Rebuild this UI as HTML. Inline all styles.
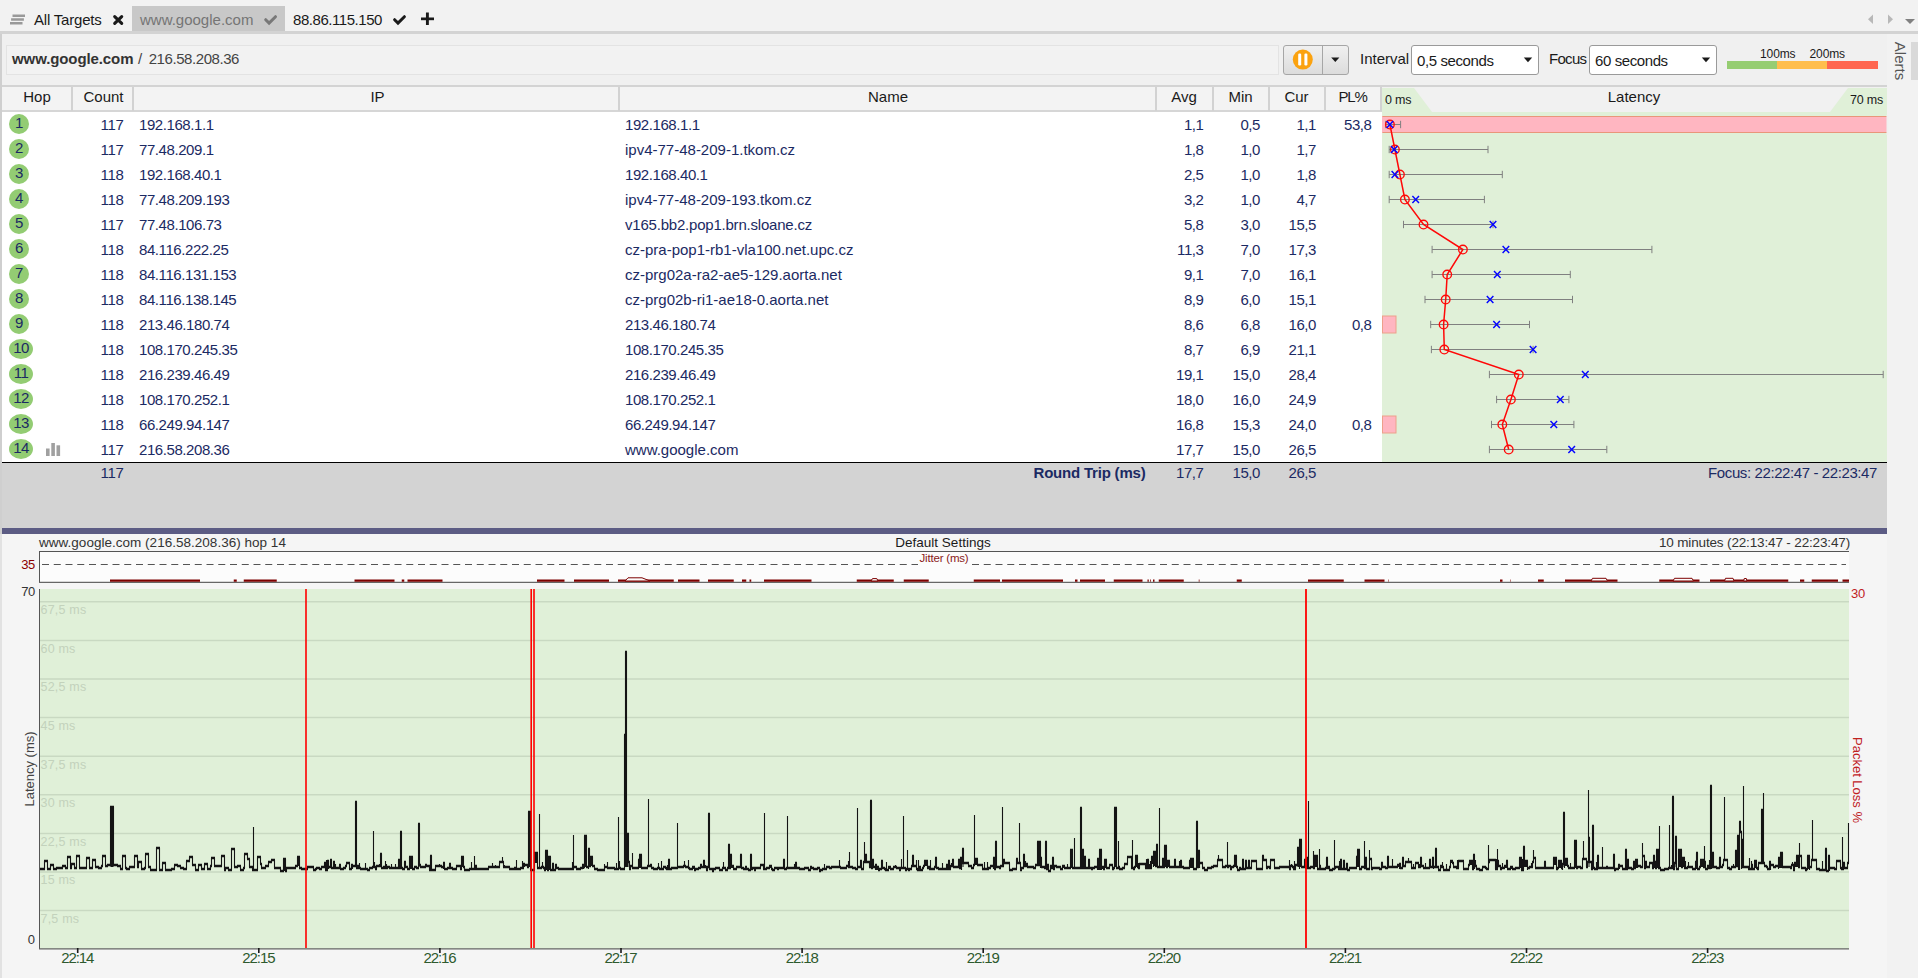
<!DOCTYPE html>
<html lang="en"><head><meta charset="utf-8"><title>PingPlotter - www.google.com</title>
<style>
html,body{margin:0;padding:0}
body{width:1918px;height:978px;overflow:hidden;position:relative;background:#f2f2f2;
 font-family:"Liberation Sans",sans-serif;font-size:15px;color:#1a1a1a}
.a{position:absolute;white-space:pre;line-height:20px;height:20px}
.r{text-align:right}
.c{text-align:center}
.n{letter-spacing:-0.42px}
.q{letter-spacing:-0.25px}
.nv{color:#1b2a63}
.box{position:absolute}
svg{position:absolute;left:0;top:0;overflow:visible}
.hd{position:absolute;top:87px;height:23px;line-height:20px;text-align:center;color:#1a1a1a;background:#f3f3f3}
.sep{position:absolute;top:87px;height:24px;width:1.5px;background:#d2d2d2}
.hop{position:absolute;height:20px;border-radius:50%;background:#93cc73;color:#1b2a63;text-align:center;line-height:17px;letter-spacing:-0.5px}
.dd{position:absolute;top:45px;height:28px;width:126px;border:1px solid #9a9a9a;border-radius:3px;background:#fff}
.gl{position:absolute;left:40.5px;color:#c3d2bc;font-size:12.5px;line-height:14px;white-space:pre;letter-spacing:0.2px}
.tk{position:absolute;top:948px;width:60px;text-align:center;color:#2e5a2e;font-size:15px;line-height:20px;letter-spacing:-1.1px}
</style></head><body>

<div class="box" style="left:0;top:31px;width:1918px;height:3px;background:#d3d3d3"></div>
<div class="box" style="left:132px;top:6px;width:153px;height:25px;background:#c8c8c8"></div>
<div class="a" style="left:34px;top:10.3px;letter-spacing:-0.2px">All Targets</div>
<div class="a" style="left:140px;top:10.3px;color:#757575">www.google.com</div>
<div class="a n" style="left:293px;top:10.3px;letter-spacing:-0.45px">88.86.115.150</div>
<svg width="1918" height="34" viewBox="0 0 1918 34">
<g stroke="#999" stroke-width="2.5"><path d="M12.5 15.65H25M11.1 19.4H23.9M10 23.25H22.5"/></g>
<path d="M114.7 16.6L121.7 23.4M121.7 16.6L114.7 23.4" stroke="#1a1a1a" stroke-width="3.1" stroke-linecap="round"/>
<path d="M265.7 19.7L269.1 23.1L275.5 16.7" stroke="#787878" stroke-width="3" fill="none" stroke-linecap="round" stroke-linejoin="miter"/>
<path d="M394.6 19.7L398 23.1L404.4 16.7" stroke="#1a1a1a" stroke-width="3" fill="none" stroke-linecap="round" stroke-linejoin="miter"/>
<path d="M427.4 12.5V25" stroke="#1a1a1a" stroke-width="2.9"/><path d="M421 18.85H434" stroke="#1a1a1a" stroke-width="2.7"/>
<path d="M1873 14.5V24L1868 19.2Z" fill="#b8b8b8"/>
<path d="M1888 14.5V24L1893 19.2Z" fill="#b8b8b8"/>
<path d="M1905 19H1915L1910 24Z" fill="#808080"/>
</svg>
<div class="box" style="left:0;top:34px;width:1887px;height:51px;background:#f0f0f0"></div>
<div class="box" style="left:0;top:34px;width:1.5px;height:500px;background:#cfcfcf"></div>
<div class="box" style="left:6px;top:45px;width:1271px;height:28px;border:1px solid #e3e3e3;background:#f2f2f2"></div>
<div class="a" style="left:12px;top:49px;color:#333"><b style="letter-spacing:-0.1px">www.google.com</b><span style="color:#444;position:absolute;left:126px">/</span><span style="color:#444;letter-spacing:-0.43px;position:absolute;left:136.7px">216.58.208.36</span></div>
<div class="box" style="left:1283px;top:44.7px;width:64px;height:28px;border:1px solid #a6a6a6;border-radius:3px;background:linear-gradient(#f0f0f0,#dcdcdc)"></div>
<div class="box" style="left:1322px;top:46px;width:1px;height:28px;background:#a6a6a6"></div>
<svg width="1918" height="90" viewBox="0 0 1918 90" style="z-index:5">
<circle cx="1302.8" cy="59.6" r="10" fill="#fba20f"/>
<rect x="1298.2" y="53.5" width="3" height="12" rx="1.2" fill="#fff"/><rect x="1304.4" y="53.5" width="3" height="12" rx="1.2" fill="#fff"/>
<path d="M1331.2 57.5H1339.4L1335.3 62Z" fill="#1a1a1a"/>
<path d="M1523.8 57.5H1532.2L1528 62.2Z" fill="#1a1a1a"/>
<path d="M1701.8 57.5H1710.2L1706 62.2Z" fill="#1a1a1a"/>
<rect x="1727" y="61" width="50" height="8" fill="#96cd72"/><rect x="1777" y="61" width="50" height="8" fill="#ffbe4d"/><rect x="1827" y="61" width="51" height="8" fill="#ff6650"/>
</svg>
<div class="a" style="left:1360px;top:49px">Interval</div>
<div class="dd" style="left:1411px"></div>
<div class="a" style="left:1417px;top:51px;letter-spacing:-0.4px">0,5 seconds</div>
<div class="a" style="left:1549px;top:49px;letter-spacing:-0.7px">Focus</div>
<div class="dd" style="left:1589px"></div>
<div class="a" style="left:1595px;top:51px;letter-spacing:-0.4px">60 seconds</div>
<div class="a" style="left:1760px;top:43.7px;font-size:12px;letter-spacing:-0.1px">100ms</div>
<div class="a" style="left:1809.5px;top:43.7px;font-size:12px;letter-spacing:-0.1px">200ms</div>
<div class="box" style="left:1911px;top:42px;width:7px;height:38px;background:#d9d9d9"></div>
<div class="a" style="left:1880px;top:51px;width:40px;text-align:center;color:#555;transform:rotate(90deg);transform-origin:50% 50%;font-size:15px">Alerts</div>
<div class="box" style="left:2px;top:85px;width:1885px;height:2px;background:#d3d3d3"></div>
<div class="box" style="left:2px;top:87px;width:1380px;height:23px;background:#f3f3f3"></div>
<div class="box" style="left:2px;top:110.3px;width:1380px;height:1.5px;background:#d6d6d6"></div>
<div class="box" style="left:2px;top:112px;width:1380px;height:350px;background:#fff"></div>
<div class="hd" style="left:2px;width:70px">Hop</div>
<div class="hd" style="left:73px;width:61px">Count</div>
<div class="hd" style="left:134px;width:487px">IP</div>
<div class="hd" style="left:620px;width:536px">Name</div>
<div class="hd" style="left:1156px;width:56px">Avg</div>
<div class="hd" style="left:1213px;width:55px">Min</div>
<div class="hd" style="left:1269px;width:55px">Cur</div>
<div class="hd" style="left:1325px;width:55px;letter-spacing:-1.2px">PL%</div>
<div class="sep" style="left:71px"></div>
<div class="sep" style="left:132.2px"></div>
<div class="sep" style="left:618.2px"></div>
<div class="sep" style="left:1155.2px"></div>
<div class="sep" style="left:1212.2px"></div>
<div class="sep" style="left:1268.2px"></div>
<div class="sep" style="left:1324px"></div>
<div class="sep" style="left:1380.3px"></div>
<div class="box" style="left:1382px;top:87px;width:505px;height:25px;background:#f1f1f1"></div>
<div class="box" style="left:1382px;top:112px;width:505px;height:350px;background:#e0f0d8"></div>
<div class="hop" style="left:9px;top:114.0px;width:20px">1</div>
<div class="a r q nv" style="left:72px;width:51.7px;top:114.5px">117</div>
<div class="a n nv" style="left:139px;top:114.5px">192.168.1.1</div>
<div class="a n nv" style="left:625px;top:114.5px">192.168.1.1</div>
<div class="a r n nv" style="left:1156px;width:47.5px;top:114.5px">1,1</div>
<div class="a r n nv" style="left:1213px;width:47px;top:114.5px">0,5</div>
<div class="a r n nv" style="left:1269px;width:47px;top:114.5px">1,1</div>
<div class="a r n nv" style="left:1325px;width:46.5px;top:114.5px">53,8</div>
<div class="hop" style="left:9px;top:139.0px;width:20px">2</div>
<div class="a r q nv" style="left:72px;width:51.7px;top:139.5px">117</div>
<div class="a n nv" style="left:139px;top:139.5px">77.48.209.1</div>
<div class="a nv" style="left:625px;top:139.5px">ipv4-77-48-209-1.tkom.cz</div>
<div class="a r n nv" style="left:1156px;width:47.5px;top:139.5px">1,8</div>
<div class="a r n nv" style="left:1213px;width:47px;top:139.5px">1,0</div>
<div class="a r n nv" style="left:1269px;width:47px;top:139.5px">1,7</div>
<div class="hop" style="left:9px;top:164.0px;width:20px">3</div>
<div class="a r q nv" style="left:72px;width:51.7px;top:164.5px">118</div>
<div class="a n nv" style="left:139px;top:164.5px">192.168.40.1</div>
<div class="a n nv" style="left:625px;top:164.5px">192.168.40.1</div>
<div class="a r n nv" style="left:1156px;width:47.5px;top:164.5px">2,5</div>
<div class="a r n nv" style="left:1213px;width:47px;top:164.5px">1,0</div>
<div class="a r n nv" style="left:1269px;width:47px;top:164.5px">1,8</div>
<div class="hop" style="left:9px;top:189.0px;width:20px">4</div>
<div class="a r q nv" style="left:72px;width:51.7px;top:189.5px">118</div>
<div class="a n nv" style="left:139px;top:189.5px">77.48.209.193</div>
<div class="a nv" style="left:625px;top:189.5px">ipv4-77-48-209-193.tkom.cz</div>
<div class="a r n nv" style="left:1156px;width:47.5px;top:189.5px">3,2</div>
<div class="a r n nv" style="left:1213px;width:47px;top:189.5px">1,0</div>
<div class="a r n nv" style="left:1269px;width:47px;top:189.5px">4,7</div>
<div class="hop" style="left:9px;top:214.0px;width:20px">5</div>
<div class="a r q nv" style="left:72px;width:51.7px;top:214.5px">117</div>
<div class="a n nv" style="left:139px;top:214.5px">77.48.106.73</div>
<div class="a nv" style="left:625px;top:214.5px;letter-spacing:-0.21px">v165.bb2.pop1.brn.sloane.cz</div>
<div class="a r n nv" style="left:1156px;width:47.5px;top:214.5px">5,8</div>
<div class="a r n nv" style="left:1213px;width:47px;top:214.5px">3,0</div>
<div class="a r n nv" style="left:1269px;width:47px;top:214.5px">15,5</div>
<div class="hop" style="left:9px;top:239.0px;width:20px">6</div>
<div class="a r q nv" style="left:72px;width:51.7px;top:239.5px">118</div>
<div class="a n nv" style="left:139px;top:239.5px">84.116.222.25</div>
<div class="a nv" style="left:625px;top:239.5px">cz-pra-pop1-rb1-vla100.net.upc.cz</div>
<div class="a r n nv" style="left:1156px;width:47.5px;top:239.5px">11,3</div>
<div class="a r n nv" style="left:1213px;width:47px;top:239.5px">7,0</div>
<div class="a r n nv" style="left:1269px;width:47px;top:239.5px">17,3</div>
<div class="hop" style="left:9px;top:264.0px;width:20px">7</div>
<div class="a r q nv" style="left:72px;width:51.7px;top:264.5px">118</div>
<div class="a n nv" style="left:139px;top:264.5px">84.116.131.153</div>
<div class="a nv" style="left:625px;top:264.5px">cz-prg02a-ra2-ae5-129.aorta.net</div>
<div class="a r n nv" style="left:1156px;width:47.5px;top:264.5px">9,1</div>
<div class="a r n nv" style="left:1213px;width:47px;top:264.5px">7,0</div>
<div class="a r n nv" style="left:1269px;width:47px;top:264.5px">16,1</div>
<div class="hop" style="left:9px;top:289.0px;width:20px">8</div>
<div class="a r q nv" style="left:72px;width:51.7px;top:289.5px">118</div>
<div class="a n nv" style="left:139px;top:289.5px">84.116.138.145</div>
<div class="a nv" style="left:625px;top:289.5px">cz-prg02b-ri1-ae18-0.aorta.net</div>
<div class="a r n nv" style="left:1156px;width:47.5px;top:289.5px">8,9</div>
<div class="a r n nv" style="left:1213px;width:47px;top:289.5px">6,0</div>
<div class="a r n nv" style="left:1269px;width:47px;top:289.5px">15,1</div>
<div class="hop" style="left:9px;top:314.0px;width:20px">9</div>
<div class="a r q nv" style="left:72px;width:51.7px;top:314.5px">118</div>
<div class="a n nv" style="left:139px;top:314.5px">213.46.180.74</div>
<div class="a n nv" style="left:625px;top:314.5px">213.46.180.74</div>
<div class="a r n nv" style="left:1156px;width:47.5px;top:314.5px">8,6</div>
<div class="a r n nv" style="left:1213px;width:47px;top:314.5px">6,8</div>
<div class="a r n nv" style="left:1269px;width:47px;top:314.5px">16,0</div>
<div class="a r n nv" style="left:1325px;width:46.5px;top:314.5px">0,8</div>
<div class="hop" style="left:9px;top:339.0px;width:24px">10</div>
<div class="a r q nv" style="left:72px;width:51.7px;top:339.5px">118</div>
<div class="a n nv" style="left:139px;top:339.5px">108.170.245.35</div>
<div class="a n nv" style="left:625px;top:339.5px">108.170.245.35</div>
<div class="a r n nv" style="left:1156px;width:47.5px;top:339.5px">8,7</div>
<div class="a r n nv" style="left:1213px;width:47px;top:339.5px">6,9</div>
<div class="a r n nv" style="left:1269px;width:47px;top:339.5px">21,1</div>
<div class="hop" style="left:9px;top:364.0px;width:24px">11</div>
<div class="a r q nv" style="left:72px;width:51.7px;top:364.5px">118</div>
<div class="a n nv" style="left:139px;top:364.5px">216.239.46.49</div>
<div class="a n nv" style="left:625px;top:364.5px">216.239.46.49</div>
<div class="a r n nv" style="left:1156px;width:47.5px;top:364.5px">19,1</div>
<div class="a r n nv" style="left:1213px;width:47px;top:364.5px">15,0</div>
<div class="a r n nv" style="left:1269px;width:47px;top:364.5px">28,4</div>
<div class="hop" style="left:9px;top:389.0px;width:24px">12</div>
<div class="a r q nv" style="left:72px;width:51.7px;top:389.5px">118</div>
<div class="a n nv" style="left:139px;top:389.5px">108.170.252.1</div>
<div class="a n nv" style="left:625px;top:389.5px">108.170.252.1</div>
<div class="a r n nv" style="left:1156px;width:47.5px;top:389.5px">18,0</div>
<div class="a r n nv" style="left:1213px;width:47px;top:389.5px">16,0</div>
<div class="a r n nv" style="left:1269px;width:47px;top:389.5px">24,9</div>
<div class="hop" style="left:9px;top:414.0px;width:24px">13</div>
<div class="a r q nv" style="left:72px;width:51.7px;top:414.5px">118</div>
<div class="a n nv" style="left:139px;top:414.5px">66.249.94.147</div>
<div class="a n nv" style="left:625px;top:414.5px">66.249.94.147</div>
<div class="a r n nv" style="left:1156px;width:47.5px;top:414.5px">16,8</div>
<div class="a r n nv" style="left:1213px;width:47px;top:414.5px">15,3</div>
<div class="a r n nv" style="left:1269px;width:47px;top:414.5px">24,0</div>
<div class="a r n nv" style="left:1325px;width:46.5px;top:414.5px">0,8</div>
<div class="hop" style="left:9px;top:439.0px;width:24px">14</div>
<div class="a r q nv" style="left:72px;width:51.7px;top:439.5px">117</div>
<div class="a n nv" style="left:139px;top:439.5px">216.58.208.36</div>
<div class="a nv" style="left:625px;top:439.5px">www.google.com</div>
<div class="a r n nv" style="left:1156px;width:47.5px;top:439.5px">17,7</div>
<div class="a r n nv" style="left:1213px;width:47px;top:439.5px">15,0</div>
<div class="a r n nv" style="left:1269px;width:47px;top:439.5px">26,5</div>
<div class="box" style="left:2px;top:462px;width:1885px;height:1.2px;background:#000"></div>
<div class="box" style="left:2px;top:463.2px;width:1885px;height:65px;background:#d3d3d3"></div>
<div class="box" style="left:2px;top:528.4px;width:1885px;height:6px;background:#5c5c84"></div>
<div class="a r q nv" style="left:72px;width:51.7px;top:462.5px">117</div>
<div class="a r nv" style="left:1000px;width:145.5px;top:462.5px;font-weight:700;letter-spacing:-0.2px">Round Trip (ms)</div>
<div class="a r n nv" style="left:1156px;width:47.5px;top:462.5px">17,7</div>
<div class="a r n nv" style="left:1213px;width:47px;top:462.5px">15,0</div>
<div class="a r n nv" style="left:1269px;width:47px;top:462.5px">26,5</div>
<div class="a r nv" style="left:1600px;width:277px;top:462.5px;letter-spacing:-0.4px">Focus: 22:22:47 - 22:23:47</div>
<svg width="1918" height="540" viewBox="0 0 1918 540">
<path d="M1382 88H1414L1432 112H1382Z" fill="#e0f0d8"/>
<path d="M1887 88H1848L1830 112H1887Z" fill="#e0f0d8"/>
<rect x="1382" y="116" width="505" height="17" fill="#ffb6c1"/><path d="M1382.5 116.5H1887M1382.5 132.5H1887" stroke="#e9967a" stroke-width="1"/>
<rect x="1886.5" y="115" width="2" height="20" fill="#f0f0f0"/>
<rect x="1382.5" y="316.0" width="13.5" height="17" fill="#ffb6c1" stroke="#eda08a" stroke-width="1"/>
<rect x="1382.5" y="416.0" width="13.5" height="17" fill="#ffb6c1" stroke="#eda08a" stroke-width="1"/>
<path d="M1385.6 124.5H1400.6M1385.6 120.8V128.2M1400.6 120.8V128.2" stroke="#808080" stroke-width="1" fill="none"/>
<path d="M1389.2 149.5H1488.0M1389.2 145.8V153.2M1488.0 145.8V153.2" stroke="#808080" stroke-width="1" fill="none"/>
<path d="M1389.2 174.5H1502.3M1389.2 170.8V178.2M1502.3 170.8V178.2" stroke="#808080" stroke-width="1" fill="none"/>
<path d="M1389.2 199.5H1484.4M1389.2 195.8V203.2M1484.4 195.8V203.2" stroke="#808080" stroke-width="1" fill="none"/>
<path d="M1403.5 224.5H1493.0M1403.5 220.8V228.2M1493.0 220.8V228.2" stroke="#808080" stroke-width="1" fill="none"/>
<path d="M1432.1 249.5H1651.9M1432.1 245.8V253.2M1651.9 245.8V253.2" stroke="#808080" stroke-width="1" fill="none"/>
<path d="M1432.1 274.5H1570.3M1432.1 270.8V278.2M1570.3 270.8V278.2" stroke="#808080" stroke-width="1" fill="none"/>
<path d="M1425.0 299.5H1572.5M1425.0 295.8V303.2M1572.5 295.8V303.2" stroke="#808080" stroke-width="1" fill="none"/>
<path d="M1430.7 324.5H1529.5M1430.7 320.8V328.2M1529.5 320.8V328.2" stroke="#808080" stroke-width="1" fill="none"/>
<path d="M1431.4 349.5H1533.1M1431.4 345.8V353.2M1533.1 345.8V353.2" stroke="#808080" stroke-width="1" fill="none"/>
<path d="M1489.4 374.5H1883.2M1489.4 370.8V378.2M1883.2 370.8V378.2" stroke="#808080" stroke-width="1" fill="none"/>
<path d="M1496.6 399.5H1568.9M1496.6 395.8V403.2M1568.9 395.8V403.2" stroke="#808080" stroke-width="1" fill="none"/>
<path d="M1491.5 424.5H1573.9M1491.5 420.8V428.2M1573.9 420.8V428.2" stroke="#808080" stroke-width="1" fill="none"/>
<path d="M1489.4 449.5H1606.8M1489.4 445.8V453.2M1606.8 445.8V453.2" stroke="#808080" stroke-width="1" fill="none"/>
<polyline points="1389.9,124.5 1394.9,149.5 1399.9,174.5 1404.9,199.5 1423.5,224.5 1462.9,249.5 1447.2,274.5 1445.7,299.5 1443.6,324.5 1444.3,349.5 1518.8,374.5 1510.9,399.5 1502.3,424.5 1508.7,449.5" fill="none" stroke="#ff0808" stroke-width="1.5"/>
<circle cx="1389.9" cy="124.5" r="4.3" fill="none" stroke="#ff0808" stroke-width="1.35"/>
<circle cx="1394.9" cy="149.5" r="4.3" fill="none" stroke="#ff0808" stroke-width="1.35"/>
<circle cx="1399.9" cy="174.5" r="4.3" fill="none" stroke="#ff0808" stroke-width="1.35"/>
<circle cx="1404.9" cy="199.5" r="4.3" fill="none" stroke="#ff0808" stroke-width="1.35"/>
<circle cx="1423.5" cy="224.5" r="4.3" fill="none" stroke="#ff0808" stroke-width="1.35"/>
<circle cx="1462.9" cy="249.5" r="4.3" fill="none" stroke="#ff0808" stroke-width="1.35"/>
<circle cx="1447.2" cy="274.5" r="4.3" fill="none" stroke="#ff0808" stroke-width="1.35"/>
<circle cx="1445.7" cy="299.5" r="4.3" fill="none" stroke="#ff0808" stroke-width="1.35"/>
<circle cx="1443.6" cy="324.5" r="4.3" fill="none" stroke="#ff0808" stroke-width="1.35"/>
<circle cx="1444.3" cy="349.5" r="4.3" fill="none" stroke="#ff0808" stroke-width="1.35"/>
<circle cx="1518.8" cy="374.5" r="4.3" fill="none" stroke="#ff0808" stroke-width="1.35"/>
<circle cx="1510.9" cy="399.5" r="4.3" fill="none" stroke="#ff0808" stroke-width="1.35"/>
<circle cx="1502.3" cy="424.5" r="4.3" fill="none" stroke="#ff0808" stroke-width="1.35"/>
<circle cx="1508.7" cy="449.5" r="4.3" fill="none" stroke="#ff0808" stroke-width="1.35"/>
<path d="M1386.6 121.0L1393.2 128.0M1393.2 121.0L1386.6 128.0" stroke="#0505ff" stroke-width="1.45"/>
<path d="M1390.9 146.0L1397.5 153.0M1397.5 146.0L1390.9 153.0" stroke="#0505ff" stroke-width="1.45"/>
<path d="M1391.6 171.0L1398.2 178.0M1398.2 171.0L1391.6 178.0" stroke="#0505ff" stroke-width="1.45"/>
<path d="M1412.4 196.0L1419.0 203.0M1419.0 196.0L1412.4 203.0" stroke="#0505ff" stroke-width="1.45"/>
<path d="M1489.7 221.0L1496.3 228.0M1496.3 221.0L1489.7 228.0" stroke="#0505ff" stroke-width="1.45"/>
<path d="M1502.6 246.0L1509.2 253.0M1509.2 246.0L1502.6 253.0" stroke="#0505ff" stroke-width="1.45"/>
<path d="M1494.0 271.0L1500.6 278.0M1500.6 271.0L1494.0 278.0" stroke="#0505ff" stroke-width="1.45"/>
<path d="M1486.8 296.0L1493.4 303.0M1493.4 296.0L1486.8 303.0" stroke="#0505ff" stroke-width="1.45"/>
<path d="M1493.3 321.0L1499.9 328.0M1499.9 321.0L1493.3 328.0" stroke="#0505ff" stroke-width="1.45"/>
<path d="M1529.8 346.0L1536.4 353.0M1536.4 346.0L1529.8 353.0" stroke="#0505ff" stroke-width="1.45"/>
<path d="M1582.0 371.0L1588.6 378.0M1588.6 371.0L1582.0 378.0" stroke="#0505ff" stroke-width="1.45"/>
<path d="M1557.0 396.0L1563.6 403.0M1563.6 396.0L1557.0 403.0" stroke="#0505ff" stroke-width="1.45"/>
<path d="M1550.5 421.0L1557.1 428.0M1557.1 421.0L1550.5 428.0" stroke="#0505ff" stroke-width="1.45"/>
<path d="M1568.4 446.0L1575.0 453.0M1575.0 446.0L1568.4 453.0" stroke="#0505ff" stroke-width="1.45"/>
<g fill="#a0a0a0"><rect x="46" y="448.5" width="3.6" height="7.5"/><rect x="51.3" y="443" width="3.6" height="13"/><rect x="56.5" y="445.3" width="3.6" height="10.7"/></g>
</svg>
<div class="a" style="left:1385px;top:90px;font-size:12.5px;letter-spacing:-0.2px">0 ms</div>
<div class="a r" style="left:1800px;width:83px;top:90px;font-size:12.5px;letter-spacing:-0.2px">70 ms</div>
<div class="a c" style="left:1584px;width:100px;top:87px">Latency</div>
<div class="box" style="left:0;top:534px;width:1887px;height:444px;background:#f5f5f5"></div>
<div class="box" style="left:0;top:534px;width:2px;height:444px;background:#e2e2e2"></div>
<div class="a" style="left:39px;top:532.5px;font-size:13.5px;color:#333;letter-spacing:0.02px">www.google.com (216.58.208.36) hop 14</div>
<div class="a c" style="left:843px;width:200px;top:532.5px;font-size:13.5px;color:#1a1a1a">Default Settings</div>
<div class="a r" style="left:1550px;width:300px;top:532.5px;font-size:13.5px;color:#333;letter-spacing:-0.15px">10 minutes (22:13:47 - 22:23:47)</div>
<div class="box" style="left:39px;top:551px;width:1810px;height:31px;background:#fcfcfc"></div>
<div class="box" style="left:39px;top:589px;width:1810px;height:360px;background:#e0f0d8"></div>
<svg width="1918" height="978" viewBox="0 0 1918 978">
<path d="M39 551.5H1849" stroke="#555" stroke-width="1"/>
<path d="M39.5 551V582" stroke="#555" stroke-width="1"/>
<path d="M39 582.3H1849" stroke="#666" stroke-width="1.2"/>
<path d="M42 564.5H918M972 564.5H1846" stroke="#555" stroke-width="1" stroke-dasharray="7 4.75"/>
<path d="M110 580.6H200M233.75 580.6H236.75M243.75 580.6H276.75M354.5 580.6H394.5M401.75 580.6H404.25M407.5 580.6H442.5M537 580.6H564.5M574 580.6H609M618 580.6H673.75M678 580.6H699.5M708 580.6H733.75M742 580.6H746.25M749.5 580.6H751.25M764 580.6H811.5M856.75 580.6H893.75M903.75 580.6H928.75M973.75 580.6H1000M1002 580.6H1063M1075 580.6H1077.5M1080 580.6H1105M1113.75 580.6H1142.5M1147.5 580.6H1148.75M1150 580.6H1150.75M1153 580.6H1154.5M1158.75 580.6H1183.75M1198.75 580.6H1199.5M1236.75 580.6H1241.75M1308 580.6H1343.75M1364.5 580.6H1384.5M1388 580.6H1388.5M1500 580.6H1502.5M1510.5 580.6H1511M1538 580.6H1543.75M1565 580.6H1617.5M1659.25 580.6H1699.5M1710 580.6H1788.25M1800 580.6H1804.25M1811.75 580.6H1838M1842.5 580.6H1849" stroke="#7d0000" stroke-width="2.4" fill="none"/>
<path d="M625 581L628 577.8H642L650 581Z" fill="#fcfcfc" stroke="#7d0000" stroke-width="1"/>
<path d="M871 581L872.5 578.6H876.8L878 581Z" fill="#fcfcfc" stroke="#7d0000" stroke-width="1"/>
<path d="M1591 581L1592.5 578.3H1606L1607.5 581Z" fill="#fcfcfc" stroke="#7d0000" stroke-width="1"/>
<path d="M1673 581L1674.5 578.3H1692L1693.5 581Z" fill="#fcfcfc" stroke="#7d0000" stroke-width="1"/>
<path d="M1724.5 581L1725.5 578.3H1733L1734 581Z" fill="#fcfcfc" stroke="#7d0000" stroke-width="1"/>
<path d="M1743.6 581L1744.3 578.5H1746.3L1747 581Z" fill="#fcfcfc" stroke="#7d0000" stroke-width="1"/>
<path d="M40 910.60H1849" stroke="#c9d9c2" stroke-width="1.5"/>
<path d="M40 872.00H1849" stroke="#c9d9c2" stroke-width="1.5"/>
<path d="M40 833.39H1849" stroke="#c9d9c2" stroke-width="1.5"/>
<path d="M40 794.79H1849" stroke="#c9d9c2" stroke-width="1.5"/>
<path d="M40 756.19H1849" stroke="#c9d9c2" stroke-width="1.5"/>
<path d="M40 717.59H1849" stroke="#c9d9c2" stroke-width="1.5"/>
<path d="M40 678.98H1849" stroke="#c9d9c2" stroke-width="1.5"/>
<path d="M40 640.38H1849" stroke="#c9d9c2" stroke-width="1.5"/>
<path d="M40 601.78H1849" stroke="#c9d9c2" stroke-width="1.5"/>
</svg>
<div class="gl" style="top:911.9px">7,5 ms</div>
<div class="gl" style="top:873.3px">15 ms</div>
<div class="gl" style="top:834.7px">22,5 ms</div>
<div class="gl" style="top:796.1px">30 ms</div>
<div class="gl" style="top:757.5px">37,5 ms</div>
<div class="gl" style="top:718.9px">45 ms</div>
<div class="gl" style="top:680.3px">52,5 ms</div>
<div class="gl" style="top:641.7px">60 ms</div>
<div class="gl" style="top:603.1px">67,5 ms</div>
<svg width="1918" height="978" viewBox="0 0 1918 978">
<path d="M40.0 869H42.0M41.0 869H45.0M44.0 861H48.0M47.0 869H51.0M50.0 865H54.0M53.0 869H57.0M56.0 868H60.0M59.0 868H63.0M62.0 866H66.0M65.0 868H68.0M67.0 857H71.0M70.0 868H72.0M71.0 864H75.0M74.0 868H77.0M76.0 856H80.0M79.0 868H81.0M80.0 868H84.0M83.0 868H87.0M86.0 858H90.0M89.0 868H93.0M92.0 860H96.0M95.0 867H99.0M98.0 868H102.0M101.0 866H103.0M102.0 856H106.0M105.0 866H108.0M107.0 865H111.0M110.0 807H114.0M113.0 865H118.0M117.0 866H121.0M120.0 869H123.0M122.0 856H126.0M125.0 868H127.0M126.0 869H130.0M129.0 867H133.0M132.0 867H135.0M134.0 856H138.0M137.0 867H139.0M138.0 862H142.0M141.0 869H145.0M144.0 868H146.0M145.0 854H149.0M148.0 867H151.0M150.0 870H154.0M153.0 870H157.0M156.0 848H160.0M159.0 870H163.0M162.0 863H166.0M165.0 870H169.0M168.0 870H172.0M171.0 869H175.0M174.0 865H178.0M177.0 866H181.0M180.0 868H184.0M183.0 869H187.0M186.0 861H190.0M189.0 857H193.0M192.0 865H196.0M195.0 870H199.0M198.0 865H202.0M201.0 869H205.0M204.0 864H208.0M207.0 869H211.0M210.0 866H212.0M211.0 858H215.0M214.0 866H217.0M216.0 866H220.0M219.0 866H222.0M221.0 856H225.0M224.0 870H226.0M225.0 868H229.0M228.0 870H232.0M231.0 849H235.0M234.0 867H238.0M237.0 866H241.0M240.0 870H244.0M243.0 868H245.0M244.0 854H248.0M247.0 859H250.0M249.0 867H253.0M252.0 870H254.0M253.0 870H256.0M255.0 870H258.0M257.0 857H261.0M260.0 864H262.0M261.0 868H266.0M265.0 866H269.0M268.0 862H272.0M271.0 860H275.0M274.0 868H278.0M277.0 868H281.0M280.0 871H284.0M283.0 859H286.0M285.0 871H287.0M286.0 868H290.0M289.0 868H293.0M292.0 868H296.0M295.0 866H298.0M297.0 857H300.0M299.0 868H302.0M301.0 869H305.0M304.0 869H307.0M306.0 869H308.0M307.0 867H310.0M309.0 867H311.0M310.0 867H313.0M312.0 867H314.0M313.0 870H316.0M315.0 869H317.0M316.0 868H319.0M318.0 868H320.0M319.0 869H322.0M321.0 867H323.0M322.0 867H325.0M324.0 863H326.0M325.0 870H327.0M326.0 870H328.0M327.0 861H329.0M328.0 867H331.0M330.0 860H332.0M331.0 868H334.0M333.0 862H335.0M334.0 868H336.0M335.0 868H337.0M336.0 868H338.0M337.0 868H340.0M339.0 865H341.0M340.0 869H343.0M342.0 869H344.0M343.0 868H346.0M345.0 866H347.0M346.0 863H349.0M348.0 863H350.0M349.0 869H352.0M351.0 865H353.0M352.0 866H355.0M354.0 866H356.0M355.0 802H357.0M356.0 868H358.0M357.0 866H359.0M358.0 868H360.0M359.0 868H361.0M360.0 869H362.0M361.0 869H364.0M363.0 869H365.0M364.0 869H366.0M365.0 869H367.0M366.0 869H368.0M367.0 870H370.0M369.0 868H371.0M370.0 868H373.0M372.0 867H374.0M373.0 867H375.0M374.0 867H376.0M375.0 869H377.0M376.0 866H379.0M378.0 866H380.0M379.0 866H381.0M380.0 854H382.0M381.0 868H384.0M383.0 867H385.0M384.0 868H386.0M385.0 868H387.0M386.0 868H388.0M387.0 867H390.0M389.0 868H391.0M390.0 868H392.0M391.0 868H393.0M392.0 868H394.0M393.0 868H396.0M395.0 868H397.0M396.0 868H399.0M398.0 860H400.0M399.0 868H401.0M400.0 832H402.0M401.0 868H403.0M402.0 869H405.0M404.0 862H406.0M405.0 867H408.0M407.0 869H409.0M408.0 869H410.0M409.0 857H413.0M412.0 869H414.0M413.0 869H415.0M414.0 867H417.0M416.0 868H418.0M417.0 868H419.0M418.0 824H420.0M419.0 865H421.0M420.0 867H423.0M422.0 867H424.0M423.0 867H426.0M425.0 865H427.0M426.0 866H429.0M428.0 866H430.0M429.0 870H431.0M430.0 856H432.0M431.0 870H433.0M432.0 870H435.0M434.0 870H436.0M435.0 866H438.0M437.0 866H439.0M438.0 866H440.0M439.0 866H441.0M440.0 866H442.0M441.0 867H444.0M443.0 863H445.0M444.0 869H447.0M446.0 869H448.0M447.0 868H450.0M449.0 864H451.0M450.0 868H453.0M452.0 869H454.0M453.0 869H456.0M455.0 869H457.0M456.0 866H459.0M458.0 866H461.0M460.0 869H462.0M461.0 857H464.0M463.0 867H465.0M464.0 870H467.0M466.0 870H468.0M467.0 870H470.0M469.0 869H471.0M470.0 869H472.0M471.0 869H473.0M472.0 869H474.0M473.0 869H475.0M474.0 869H476.0M475.0 866H477.0M476.0 869H479.0M478.0 869H480.0M479.0 869H482.0M481.0 869H483.0M482.0 869H485.0M484.0 869H486.0M485.0 869H488.0M487.0 869H489.0M488.0 867H491.0M490.0 867H492.0M491.0 867H493.0M492.0 867H494.0M493.0 867H495.0M494.0 867H496.0M495.0 867H497.0M496.0 867H498.0M497.0 867H500.0M499.0 862H501.0M500.0 862H503.0M502.0 862H504.0M503.0 867H505.0M504.0 867H506.0M505.0 867H507.0M506.0 867H509.0M508.0 867H510.0M509.0 869H512.0M511.0 869H513.0M512.0 869H515.0M514.0 868H516.0M515.0 869H517.0M516.0 869H518.0M517.0 869H519.0M518.0 869H521.0M520.0 868H522.0M521.0 868H523.0M522.0 868H524.0M523.0 864H525.0M524.0 865H527.0M526.0 865H528.0M527.0 867H529.0M528.0 812H531.0M530.0 870H533.0M532.0 870H535.0M534.0 853H538.0M537.0 868H539.0M538.0 868H540.0M539.0 868H541.0M540.0 868H542.0M541.0 867H543.0M542.0 867H544.0M543.0 868H545.0M544.0 870H546.0M545.0 851H548.0M547.0 870H549.0M548.0 857H551.0M550.0 870H553.0M552.0 864H554.0M553.0 870H556.0M555.0 865H557.0M556.0 868H559.0M558.0 869H560.0M559.0 869H562.0M561.0 869H563.0M562.0 869H565.0M564.0 869H566.0M565.0 869H568.0M567.0 869H569.0M568.0 869H571.0M570.0 869H572.0M571.0 869H573.0M572.0 869H574.0M573.0 867H575.0M574.0 867H577.0M576.0 869H578.0M577.0 869H580.0M579.0 869H581.0M580.0 868H583.0M582.0 865H584.0M583.0 867H585.0M584.0 836H587.0M586.0 867H589.0M588.0 849H590.0M589.0 866H591.0M590.0 857H593.0M592.0 866H595.0M594.0 869H596.0M595.0 869H598.0M597.0 870H599.0M598.0 870H601.0M600.0 870H602.0M601.0 870H604.0M603.0 870H605.0M604.0 867H607.0M606.0 867H608.0M607.0 868H610.0M609.0 868H612.0M611.0 868H613.0M612.0 868H615.0M614.0 869H616.0M615.0 869H617.0M616.0 869H618.0M617.0 869H619.0M618.0 868H620.0M619.0 868H621.0M620.0 869H622.0M621.0 869H624.0M623.0 869H625.0M624.0 735H626.0M625.0 652H627.0M626.0 834H629.0M628.0 862H630.0M629.0 869H631.0M630.0 866H633.0M632.0 868H634.0M633.0 868H636.0M635.0 868H637.0M636.0 868H639.0M638.0 860H640.0M639.0 855H642.0M641.0 868H643.0M642.0 868H645.0M644.0 868H646.0M645.0 868H648.0M647.0 866H649.0M648.0 866H651.0M650.0 865H652.0M651.0 868H654.0M653.0 869H655.0M654.0 869H657.0M656.0 869H658.0M657.0 868H659.0M658.0 868H660.0M659.0 869H661.0M660.0 869H662.0M661.0 869H663.0M662.0 869H664.0M663.0 867H666.0M665.0 868H667.0M666.0 869H668.0M667.0 869H669.0M668.0 860H670.0M669.0 869H672.0M671.0 868H673.0M672.0 868H675.0M674.0 868H676.0M675.0 868H678.0M677.0 867H679.0M678.0 867H681.0M680.0 867H682.0M681.0 867H684.0M683.0 866H685.0M684.0 866H686.0M685.0 867H687.0M686.0 867H689.0M688.0 868H690.0M689.0 869H692.0M691.0 869H693.0M692.0 867H695.0M694.0 870H696.0M695.0 869H698.0M697.0 869H699.0M698.0 868H701.0M700.0 865H702.0M701.0 867H704.0M703.0 861H705.0M704.0 867H706.0M705.0 867H707.0M706.0 870H708.0M707.0 867H709.0M708.0 814H710.0M709.0 869H711.0M710.0 869H713.0M712.0 871H714.0M713.0 869H716.0M715.0 868H717.0M716.0 868H719.0M718.0 868H720.0M719.0 870H722.0M721.0 870H723.0M722.0 868H724.0M723.0 868H725.0M724.0 868H726.0M725.0 870H728.0M727.0 868H729.0M728.0 845H730.0M729.0 868H731.0M730.0 855H732.0M731.0 866H734.0M733.0 869H735.0M734.0 869H737.0M736.0 867H738.0M737.0 867H740.0M739.0 867H741.0M740.0 855H742.0M741.0 868H743.0M742.0 868H744.0M743.0 869H746.0M745.0 867H747.0M746.0 869H749.0M748.0 870H750.0M749.0 870H751.0M750.0 855H752.0M751.0 869H753.0M752.0 868H755.0M754.0 870H756.0M755.0 868H758.0M757.0 868H759.0M758.0 868H761.0M760.0 865H763.0M762.0 865H764.0M763.0 869H765.0M764.0 869H766.0M765.0 869H767.0M766.0 868H769.0M768.0 868H770.0M769.0 866H772.0M771.0 869H773.0M772.0 870H775.0M774.0 868H776.0M775.0 868H778.0M777.0 869H779.0M778.0 868H781.0M780.0 868H782.0M781.0 868H784.0M783.0 860H785.0M784.0 869H787.0M786.0 868H788.0M787.0 868H790.0M789.0 868H791.0M790.0 868H793.0M792.0 868H794.0M793.0 868H795.0M794.0 868H796.0M795.0 863H797.0M796.0 868H799.0M798.0 868H800.0M799.0 869H802.0M801.0 869H803.0M802.0 869H805.0M804.0 868H806.0M805.0 868H808.0M807.0 868H809.0M808.0 870H811.0M810.0 867H812.0M811.0 868H814.0M813.0 869H815.0M814.0 869H817.0M816.0 869H818.0M817.0 868H820.0M819.0 871H821.0M820.0 870H823.0M822.0 869H824.0M823.0 869H825.0M824.0 869H826.0M825.0 869H827.0M826.0 867H829.0M828.0 867H830.0M829.0 868H832.0M831.0 867H833.0M832.0 867H835.0M834.0 867H837.0M836.0 867H838.0M837.0 867H840.0M839.0 867H841.0M840.0 868H843.0M842.0 868H844.0M843.0 868H846.0M845.0 868H847.0M846.0 866H849.0M848.0 867H850.0M849.0 867H852.0M851.0 867H853.0M852.0 868H855.0M854.0 868H856.0M855.0 869H858.0M857.0 867H859.0M858.0 867H861.0M860.0 861H862.0M861.0 869H864.0M863.0 862H865.0M864.0 862H866.0M865.0 855H867.0M866.0 862H868.0M867.0 862H870.0M869.0 867H871.0M870.0 801H872.0M871.0 868H873.0M872.0 860H874.0M873.0 867H876.0M875.0 865H877.0M876.0 867H879.0M878.0 870H880.0M879.0 869H882.0M881.0 861H883.0M882.0 868H885.0M884.0 869H886.0M885.0 870H887.0M886.0 870H888.0M887.0 870H889.0M888.0 867H891.0M890.0 869H892.0M891.0 869H894.0M893.0 867H895.0M894.0 867H896.0M895.0 867H897.0M896.0 868H898.0M897.0 868H900.0M899.0 870H901.0M900.0 868H902.0M901.0 868H903.0M902.0 868H904.0M903.0 868H906.0M905.0 870H907.0M906.0 869H908.0M907.0 869H909.0M908.0 870H910.0M909.0 869H912.0M911.0 866H913.0M912.0 856H914.0M913.0 866H915.0M914.0 866H917.0M916.0 869H918.0M917.0 870H919.0M918.0 870H920.0M919.0 867H921.0M920.0 870H923.0M922.0 868H924.0M923.0 866H925.0M924.0 861H928.0M927.0 868H929.0M928.0 867H930.0M929.0 869H931.0M930.0 869H932.0M931.0 869H933.0M932.0 869H935.0M934.0 867H936.0M935.0 858H937.0M936.0 868H938.0M937.0 868H939.0M938.0 869H941.0M940.0 869H942.0M941.0 869H943.0M942.0 869H944.0M943.0 869H945.0M944.0 869H947.0M946.0 865H948.0M947.0 869H949.0M948.0 861H950.0M949.0 869H951.0M950.0 866H952.0M951.0 866H953.0M952.0 860H954.0M953.0 867H956.0M955.0 867H957.0M956.0 867H959.0M958.0 860H960.0M959.0 868H961.0M960.0 858H962.0M961.0 863H963.0M962.0 849H964.0M963.0 863H965.0M964.0 863H966.0M965.0 863H968.0M967.0 863H969.0M968.0 866H971.0M970.0 866H972.0M971.0 868H974.0M973.0 865H975.0M974.0 859H978.0M977.0 865H980.0M979.0 865H981.0M980.0 865H983.0M982.0 869H984.0M983.0 869H985.0M984.0 869H986.0M985.0 869H988.0M987.0 869H989.0M988.0 868H991.0M990.0 866H992.0M991.0 866H994.0M993.0 858H995.0M994.0 869H996.0M995.0 842H997.0M996.0 867H998.0M997.0 867H1000.0M999.0 868H1001.0M1000.0 866H1003.0M1002.0 866H1004.0M1003.0 860H1005.0M1004.0 863H1006.0M1005.0 863H1007.0M1006.0 863H1009.0M1008.0 863H1010.0M1009.0 870H1012.0M1011.0 870H1013.0M1012.0 869H1015.0M1014.0 869H1016.0M1015.0 869H1017.0M1016.0 859H1018.0M1017.0 863H1019.0M1018.0 863H1020.0M1019.0 863H1021.0M1020.0 870H1022.0M1021.0 868H1024.0M1023.0 855H1025.0M1024.0 866H1026.0M1025.0 866H1027.0M1026.0 864H1028.0M1027.0 867H1030.0M1029.0 867H1031.0M1030.0 867H1033.0M1032.0 867H1034.0M1033.0 868H1036.0M1035.0 865H1037.0M1036.0 865H1038.0M1037.0 842H1039.0M1038.0 865H1040.0M1039.0 842H1041.0M1040.0 858H1042.0M1041.0 867H1043.0M1042.0 867H1045.0M1044.0 868H1046.0M1045.0 842H1047.0M1046.0 869H1048.0M1047.0 865H1049.0M1048.0 871H1051.0M1050.0 866H1052.0M1051.0 868H1053.0M1052.0 858H1054.0M1053.0 869H1055.0M1054.0 866H1057.0M1056.0 867H1058.0M1057.0 867H1060.0M1059.0 867H1061.0M1060.0 869H1063.0M1062.0 866H1065.0M1064.0 868H1066.0M1065.0 868H1068.0M1067.0 868H1069.0M1068.0 868H1071.0M1070.0 850H1073.0M1072.0 868H1074.0M1073.0 868H1075.0M1074.0 868H1077.0M1076.0 868H1078.0M1077.0 868H1080.0M1079.0 868H1081.0M1080.0 808H1082.0M1081.0 868H1083.0M1082.0 850H1084.0M1083.0 868H1085.0M1084.0 857H1086.0M1085.0 868H1087.0M1086.0 868H1089.0M1088.0 860H1090.0M1089.0 868H1092.0M1091.0 869H1093.0M1092.0 868H1095.0M1094.0 867H1096.0M1095.0 867H1098.0M1097.0 859H1100.0M1099.0 850H1102.0M1101.0 867H1104.0M1103.0 869H1105.0M1104.0 860H1107.0M1106.0 868H1108.0M1107.0 868H1110.0M1109.0 865H1111.0M1110.0 865H1113.0M1112.0 869H1114.0M1113.0 868H1115.0M1114.0 808H1117.0M1116.0 868H1119.0M1118.0 867H1120.0M1119.0 869H1122.0M1121.0 869H1123.0M1122.0 868H1125.0M1124.0 864H1126.0M1125.0 864H1128.0M1127.0 857H1132.0M1131.0 868H1133.0M1132.0 868H1134.0M1133.0 869H1135.0M1134.0 867H1136.0M1135.0 856H1138.0M1137.0 867H1139.0M1138.0 868H1140.0M1139.0 864H1142.0M1141.0 864H1143.0M1142.0 864H1145.0M1144.0 864H1146.0M1145.0 868H1147.0M1146.0 868H1148.0M1147.0 860H1149.0M1148.0 868H1150.0M1149.0 868H1151.0M1150.0 868H1152.0M1151.0 857H1154.0M1153.0 852H1156.0M1155.0 866H1157.0M1156.0 845H1158.0M1157.0 867H1160.0M1159.0 867H1161.0M1160.0 867H1163.0M1162.0 859H1164.0M1163.0 867H1165.0M1164.0 846H1167.0M1166.0 867H1168.0M1167.0 861H1170.0M1169.0 867H1172.0M1171.0 867H1173.0M1172.0 867H1175.0M1174.0 860H1176.0M1175.0 867H1178.0M1177.0 867H1179.0M1178.0 867H1180.0M1179.0 867H1181.0M1180.0 861H1182.0M1181.0 867H1184.0M1183.0 868H1185.0M1184.0 868H1187.0M1186.0 868H1188.0M1187.0 868H1190.0M1189.0 861H1191.0M1190.0 859H1194.0M1193.0 869H1196.0M1195.0 869H1197.0M1196.0 822H1198.0M1197.0 867H1199.0M1198.0 851H1200.0M1199.0 863H1202.0M1201.0 863H1203.0M1202.0 868H1205.0M1204.0 870H1206.0M1205.0 870H1208.0M1207.0 868H1209.0M1208.0 868H1211.0M1210.0 868H1212.0M1211.0 867H1214.0M1213.0 866H1216.0M1215.0 866H1217.0M1216.0 866H1218.0M1217.0 860H1219.0M1218.0 860H1223.0M1222.0 867H1225.0M1224.0 867H1226.0M1225.0 866H1228.0M1227.0 867H1229.0M1228.0 866H1231.0M1230.0 869H1232.0M1231.0 867H1234.0M1233.0 866H1235.0M1234.0 856H1237.0M1236.0 867H1238.0M1237.0 870H1240.0M1239.0 868H1241.0M1240.0 869H1243.0M1242.0 860H1244.0M1243.0 869H1246.0M1245.0 861H1247.0M1246.0 868H1249.0M1248.0 861H1250.0M1249.0 868H1252.0M1251.0 861H1257.0M1256.0 869H1258.0M1257.0 869H1259.0M1258.0 869H1261.0M1260.0 869H1262.0M1261.0 869H1263.0M1262.0 856H1264.0M1263.0 860H1267.0M1266.0 868H1268.0M1267.0 867H1270.0M1269.0 868H1271.0M1270.0 860H1275.0M1274.0 868H1276.0M1275.0 868H1277.0M1276.0 868H1279.0M1278.0 868H1280.0M1279.0 867H1282.0M1281.0 867H1283.0M1282.0 867H1285.0M1284.0 867H1286.0M1285.0 867H1288.0M1287.0 867H1290.0M1289.0 869H1291.0M1290.0 866H1292.0M1291.0 866H1293.0M1292.0 867H1294.0M1293.0 869H1295.0M1294.0 869H1296.0M1295.0 865H1297.0M1296.0 865H1298.0M1297.0 848H1300.0M1299.0 840H1302.0M1301.0 867H1303.0M1302.0 867H1305.0M1304.0 860H1306.0M1305.0 868H1307.0M1306.0 858H1308.0M1307.0 868H1309.0M1308.0 868H1311.0M1310.0 867H1312.0M1311.0 867H1314.0M1313.0 868H1315.0M1314.0 856H1318.0M1317.0 869H1320.0M1319.0 866H1321.0M1320.0 869H1323.0M1322.0 869H1324.0M1323.0 869H1326.0M1325.0 868H1327.0M1326.0 858H1328.0M1327.0 868H1329.0M1328.0 867H1330.0M1329.0 870H1332.0M1331.0 870H1333.0M1332.0 869H1335.0M1334.0 868H1336.0M1335.0 867H1338.0M1337.0 867H1339.0M1338.0 869H1340.0M1339.0 869H1341.0M1340.0 860H1342.0M1341.0 869H1344.0M1343.0 861H1345.0M1344.0 869H1347.0M1346.0 864H1348.0M1347.0 870H1350.0M1349.0 868H1351.0M1350.0 868H1353.0M1352.0 868H1354.0M1353.0 868H1356.0M1355.0 868H1357.0M1356.0 857H1358.0M1357.0 850H1360.0M1359.0 869H1362.0M1361.0 867H1363.0M1362.0 867H1365.0M1364.0 868H1366.0M1365.0 858H1367.0M1366.0 869H1368.0M1367.0 869H1370.0M1369.0 859H1372.0M1371.0 869H1373.0M1372.0 868H1374.0M1373.0 868H1376.0M1375.0 868H1377.0M1376.0 868H1379.0M1378.0 868H1380.0M1379.0 869H1382.0M1381.0 863H1383.0M1382.0 867H1385.0M1384.0 867H1386.0M1385.0 868H1388.0M1387.0 857H1389.0M1388.0 867H1391.0M1390.0 867H1392.0M1391.0 867H1393.0M1392.0 867H1394.0M1393.0 867H1395.0M1394.0 867H1397.0M1396.0 867H1398.0M1397.0 865H1400.0M1399.0 864H1401.0M1400.0 868H1403.0M1402.0 858H1404.0M1403.0 866H1406.0M1405.0 862H1407.0M1406.0 862H1409.0M1408.0 862H1410.0M1409.0 862H1412.0M1411.0 868H1413.0M1412.0 868H1414.0M1413.0 868H1415.0M1414.0 868H1416.0M1415.0 863H1418.0M1417.0 863H1419.0M1418.0 867H1420.0M1419.0 867H1421.0M1420.0 858H1422.0M1421.0 866H1424.0M1423.0 868H1425.0M1424.0 868H1426.0M1425.0 868H1427.0M1426.0 868H1428.0M1427.0 868H1430.0M1429.0 860H1431.0M1430.0 867H1433.0M1432.0 858H1434.0M1433.0 867H1436.0M1435.0 849H1437.0M1436.0 867H1439.0M1438.0 870H1441.0M1440.0 866H1442.0M1441.0 867H1443.0M1442.0 867H1444.0M1443.0 870H1445.0M1444.0 870H1447.0M1446.0 870H1448.0M1447.0 870H1450.0M1449.0 867H1451.0M1450.0 861H1453.0M1452.0 863H1454.0M1453.0 867H1456.0M1455.0 867H1457.0M1456.0 868H1458.0M1457.0 868H1459.0M1458.0 861H1464.0M1463.0 869H1465.0M1464.0 869H1466.0M1465.0 869H1468.0M1467.0 869H1469.0M1468.0 865H1470.0M1469.0 861H1473.0M1472.0 869H1474.0M1473.0 855H1475.0M1474.0 866H1476.0M1475.0 866H1477.0M1476.0 869H1478.0M1477.0 869H1480.0M1479.0 870H1481.0M1480.0 870H1483.0M1482.0 867H1484.0M1483.0 867H1486.0M1485.0 868H1487.0M1486.0 869H1489.0M1488.0 862H1490.0M1489.0 860H1496.0M1495.0 869H1497.0M1496.0 869H1498.0M1497.0 861H1499.0M1498.0 866H1501.0M1500.0 869H1502.0M1501.0 868H1503.0M1502.0 868H1504.0M1503.0 868H1505.0M1504.0 866H1507.0M1506.0 861H1508.0M1507.0 869H1510.0M1509.0 869H1511.0M1510.0 867H1513.0M1512.0 869H1514.0M1513.0 869H1516.0M1515.0 868H1518.0M1517.0 868H1519.0M1518.0 868H1520.0M1519.0 858H1522.0M1521.0 870H1523.0M1522.0 870H1524.0M1523.0 847H1525.0M1524.0 861H1528.0M1527.0 868H1530.0M1529.0 867H1531.0M1530.0 867H1532.0M1531.0 867H1533.0M1532.0 862H1534.0M1533.0 858H1536.0M1535.0 868H1537.0M1536.0 868H1539.0M1538.0 868H1540.0M1539.0 868H1542.0M1541.0 868H1543.0M1542.0 868H1545.0M1544.0 862H1546.0M1545.0 868H1548.0M1547.0 868H1549.0M1548.0 868H1551.0M1550.0 868H1552.0M1551.0 868H1554.0M1553.0 858H1557.0M1556.0 869H1558.0M1557.0 868H1559.0M1558.0 861H1562.0M1561.0 868H1563.0M1562.0 864H1564.0M1563.0 813H1565.0M1564.0 859H1568.0M1567.0 866H1569.0M1568.0 868H1570.0M1569.0 868H1571.0M1570.0 868H1572.0M1571.0 868H1573.0M1572.0 868H1575.0M1574.0 841H1577.0M1576.0 868H1578.0M1577.0 867H1579.0M1578.0 867H1581.0M1580.0 868H1582.0M1581.0 868H1583.0M1582.0 859H1584.0M1583.0 859H1587.0M1586.0 867H1588.0M1587.0 862H1589.0M1588.0 838H1590.0M1589.0 862H1592.0M1591.0 869H1593.0M1592.0 826H1594.0M1593.0 868H1595.0M1594.0 869H1596.0M1595.0 869H1597.0M1596.0 869H1598.0M1597.0 856H1599.0M1598.0 868H1601.0M1600.0 868H1602.0M1601.0 868H1603.0M1602.0 868H1604.0M1603.0 868H1605.0M1604.0 868H1607.0M1606.0 867H1608.0M1607.0 868H1610.0M1609.0 868H1611.0M1610.0 868H1613.0M1612.0 868H1614.0M1613.0 855H1615.0M1614.0 870H1616.0M1615.0 869H1617.0M1616.0 869H1619.0M1618.0 865H1620.0M1619.0 866H1622.0M1621.0 866H1623.0M1622.0 869H1625.0M1624.0 869H1626.0M1625.0 850H1627.0M1626.0 869H1628.0M1627.0 860H1629.0M1628.0 868H1631.0M1630.0 868H1632.0M1631.0 869H1634.0M1633.0 862H1635.0M1634.0 868H1636.0M1635.0 860H1638.0M1637.0 866H1640.0M1639.0 866H1641.0M1640.0 867H1643.0M1642.0 856H1645.0M1644.0 868H1646.0M1645.0 862H1647.0M1646.0 867H1649.0M1648.0 867H1650.0M1649.0 863H1652.0M1651.0 863H1653.0M1652.0 868H1654.0M1653.0 856H1655.0M1654.0 862H1656.0M1655.0 868H1657.0M1656.0 850H1659.0M1658.0 868H1660.0M1659.0 868H1661.0M1660.0 870H1662.0M1661.0 870H1664.0M1663.0 870H1665.0M1664.0 869H1667.0M1666.0 869H1669.0M1668.0 868H1670.0M1669.0 868H1672.0M1671.0 868H1673.0M1672.0 797H1674.0M1673.0 869H1675.0M1674.0 863H1676.0M1675.0 837H1677.0M1676.0 869H1678.0M1677.0 869H1679.0M1678.0 850H1682.0M1681.0 867H1683.0M1682.0 858H1685.0M1684.0 868H1686.0M1685.0 868H1687.0M1686.0 868H1688.0M1687.0 867H1689.0M1688.0 867H1690.0M1689.0 867H1691.0M1690.0 867H1693.0M1692.0 869H1694.0M1693.0 869H1696.0M1695.0 862H1697.0M1696.0 853H1698.0M1697.0 869H1699.0M1698.0 869H1700.0M1699.0 867H1701.0M1700.0 860H1704.0M1703.0 867H1705.0M1704.0 862H1706.0M1705.0 869H1708.0M1707.0 866H1709.0M1708.0 868H1710.0M1709.0 868H1711.0M1710.0 786H1712.0M1711.0 867H1713.0M1712.0 853H1714.0M1713.0 867H1715.0M1714.0 867H1717.0M1716.0 868H1718.0M1717.0 868H1720.0M1719.0 858H1721.0M1720.0 867H1723.0M1722.0 865H1724.0M1723.0 860H1725.0M1724.0 860H1728.0M1727.0 868H1729.0M1728.0 868H1730.0M1729.0 869H1732.0M1731.0 867H1733.0M1732.0 867H1734.0M1733.0 867H1735.0M1734.0 867H1736.0M1735.0 851H1737.0M1736.0 866H1738.0M1737.0 836H1739.0M1739.0 822H1741.0M1740.0 832H1742.0M1741.0 840H1743.0M1742.0 867H1744.0M1743.0 867H1746.0M1745.0 867H1747.0M1746.0 867H1749.0M1748.0 869H1750.0M1749.0 869H1752.0M1751.0 865H1753.0M1752.0 869H1755.0M1754.0 861H1757.0M1756.0 868H1758.0M1757.0 869H1759.0M1758.0 863H1761.0M1760.0 863H1762.0M1761.0 810H1763.0M1762.0 863H1764.0M1763.0 863H1765.0M1764.0 866H1767.0M1766.0 867H1768.0M1767.0 869H1770.0M1769.0 862H1771.0M1770.0 865H1773.0M1772.0 865H1774.0M1773.0 867H1776.0M1775.0 866H1777.0M1776.0 866H1779.0M1778.0 858H1781.0M1780.0 853H1783.0M1782.0 867H1785.0M1784.0 867H1786.0M1785.0 867H1788.0M1787.0 867H1789.0M1788.0 867H1791.0M1790.0 868H1792.0M1791.0 865H1793.0M1792.0 865H1794.0M1793.0 870H1795.0M1794.0 863H1797.0M1796.0 856H1799.0M1798.0 867H1800.0M1799.0 856H1802.0M1801.0 868H1803.0M1802.0 868H1804.0M1803.0 868H1806.0M1805.0 870H1807.0M1806.0 869H1808.0M1807.0 856H1810.0M1809.0 867H1812.0M1811.0 860H1813.0M1812.0 860H1817.0M1816.0 869H1818.0M1817.0 869H1820.0M1819.0 870H1821.0M1820.0 870H1823.0M1822.0 870H1824.0M1823.0 870H1826.0M1825.0 849H1827.0M1826.0 871H1829.0M1828.0 856H1830.0M1829.0 868H1832.0M1831.0 868H1833.0M1832.0 868H1835.0M1834.0 869H1836.0M1835.0 869H1837.0M1836.0 861H1841.0M1840.0 868H1842.0M1841.0 869H1843.0M1842.0 869H1844.0M1843.0 863H1845.0M1844.0 868H1847.0M1846.0 868H1848.0M1847.0 863H1849.0M1848.0 863H1849.0" stroke="#141414" stroke-width="2.4" fill="none" stroke-linecap="butt"/>
<path d="M44.5 869V861M47.5 861V869M50.5 869V865M53.5 865V869M56.5 869V868M62.5 868V866M65.5 866V868M67.5 868V857M70.5 857V868M71.5 868V864M74.5 864V868M76.5 868V856M79.5 856V868M86.5 868V858M89.5 858V868M92.5 868V860M95.5 860V867M98.5 867V868M101.5 868V866M102.5 866V856M105.5 856V866M107.5 866V865M110.5 865V807M113.5 807V865M117.5 865V866M120.5 866V869M122.5 869V856M125.5 856V868M126.5 868V869M129.5 869V867M134.5 867V856M137.5 856V867M138.5 867V862M141.5 862V869M144.5 869V868M145.5 868V854M148.5 854V867M150.5 867V870M156.5 870V863M156.5 863V848M159.5 848V870M162.5 870V863M165.5 863V870M171.5 870V869M174.5 869V865M177.5 865V866M180.5 866V868M183.5 868V869M186.5 869V861M189.5 861V857M192.5 857V865M195.5 865V870M198.5 870V865M201.5 865V869M204.5 869V864M207.5 864V869M210.5 869V866M211.5 866V858M214.5 858V866M221.5 866V856M224.5 856V870M225.5 870V868M228.5 868V870M231.5 870V849M234.5 849V867M237.5 867V866M240.5 866V870M243.5 870V868M244.5 868V854M247.5 854V859M249.5 859V867M252.5 867V870M253.5 870V827M253.5 827V870M257.5 870V857M260.5 857V864M261.5 864V868M265.5 868V866M268.5 866V862M271.5 862V860M274.5 860V868M280.5 868V871M283.5 871V859M285.5 859V871M286.5 871V868M295.5 868V866M297.5 866V857M299.5 857V868M301.5 868V869M307.5 869V867M313.5 867V870M315.5 870V869M316.5 869V868M319.5 868V869M321.5 869V867M324.5 867V863M325.5 863V867M325.5 867V870M326.5 870V860M326.5 860V870M327.5 870V869M327.5 869V861M328.5 861V869M328.5 869V867M330.5 867V860M331.5 860V867M331.5 867V868M333.5 868V862M334.5 862V868M335.5 868V864M335.5 864V868M339.5 868V865M340.5 865V869M343.5 869V868M345.5 868V866M346.5 866V863M349.5 863V869M351.5 869V865M352.5 865V869M352.5 869V866M355.5 866V802M356.5 802V868M357.5 868V866M358.5 866V868M359.5 868V863M359.5 863V868M360.5 868V869M365.5 869V863M365.5 863V869M367.5 869V870M369.5 870V868M372.5 868V867M373.5 867V831M373.5 831V867M374.5 867V862M374.5 862V867M375.5 867V869M376.5 869V866M379.5 866V864M379.5 864V866M380.5 866V854M381.5 854V868M383.5 868V867M384.5 867V868M385.5 868V861M385.5 861V868M386.5 868V864M386.5 864V868M387.5 868V867M389.5 867V868M391.5 868V864M391.5 864V868M395.5 868V864M395.5 864V868M398.5 868V860M399.5 860V868M400.5 868V832M401.5 832V868M402.5 868V869M404.5 869V868M404.5 868V862M405.5 862V868M405.5 868V867M407.5 867V869M409.5 869V857M412.5 857V869M414.5 869V867M416.5 867V868M418.5 868V824M419.5 824V865M420.5 865V868M420.5 868V867M425.5 867V865M426.5 865V866M429.5 866V870M430.5 870V856M431.5 856V870M435.5 870V866M439.5 866V864M439.5 864V866M441.5 866V867M443.5 867V869M443.5 869V863M444.5 863V869M447.5 869V868M449.5 868V864M450.5 864V868M452.5 868V869M456.5 869V865M456.5 865V869M456.5 869V866M460.5 866V869M461.5 869V857M463.5 857V867M464.5 867V870M469.5 870V869M471.5 869V862M471.5 862V869M474.5 869V856M474.5 856V869M475.5 869V866M476.5 866V869M488.5 869V867M492.5 867V863M492.5 863V867M495.5 867V865M495.5 865V867M499.5 867V862M502.5 862V857M502.5 857V862M503.5 862V867M504.5 867V865M504.5 865V867M509.5 867V869M514.5 869V868M515.5 868V869M516.5 869V860M516.5 860V869M520.5 869V868M522.5 868V861M522.5 861V868M523.5 868V867M523.5 867V864M524.5 864V867M524.5 867V865M527.5 865V867M528.5 867V812M530.5 812V870M534.5 870V863M534.5 863V853M537.5 853V868M539.5 868V861M539.5 861V814M539.5 814V868M541.5 868V867M542.5 867V862M542.5 862V867M543.5 867V868M544.5 868V870M545.5 870V851M547.5 851V870M548.5 870V857M550.5 857V870M552.5 870V864M553.5 864V870M555.5 870V868M555.5 868V865M556.5 865V868M558.5 868V869M572.5 869V862M572.5 862V869M573.5 869V835M573.5 835V867M576.5 867V869M580.5 869V868M582.5 868V869M582.5 869V865M583.5 865V869M583.5 869V867M584.5 867V836M586.5 836V867M588.5 867V869M588.5 869V849M589.5 849V866M590.5 866V857M592.5 857V866M594.5 866V869M597.5 869V870M604.5 870V864M604.5 864V870M604.5 870V867M607.5 867V862M607.5 862V867M607.5 867V868M614.5 868V869M616.5 869V863M616.5 863V869M618.5 869V817M618.5 817V868M619.5 868V861M619.5 861V868M620.5 868V869M624.5 869V735M625.5 735V862M625.5 862V652M626.5 652V862M626.5 862V834M628.5 834V862M629.5 862V869M630.5 869V866M632.5 866V853M632.5 853V868M638.5 868V867M638.5 867V860M639.5 860V867M639.5 867V868M639.5 868V855M641.5 855V868M647.5 868V866M648.5 866V799M648.5 799V866M650.5 866V865M651.5 865V868M653.5 868V869M657.5 869V868M658.5 868V863M658.5 863V868M659.5 868V869M661.5 869V861M661.5 861V869M663.5 869V867M665.5 867V868M666.5 868V869M667.5 869V865M667.5 865V869M668.5 869V860M669.5 860V869M671.5 869V868M677.5 868V823M677.5 823V867M683.5 867V866M684.5 866V861M684.5 861V866M685.5 866V867M688.5 867V868M688.5 868V860M688.5 860V868M689.5 868V869M692.5 869V867M694.5 867V870M695.5 870V869M698.5 869V868M700.5 868V865M701.5 865V868M701.5 868V867M703.5 867V861M704.5 861V867M705.5 867V865M705.5 865V867M706.5 867V870M707.5 870V867M708.5 867V814M709.5 814V869M712.5 869V871M713.5 871V869M715.5 869V868M719.5 868V870M722.5 870V868M723.5 868V862M723.5 862V868M725.5 868V870M727.5 870V868M728.5 868V845M729.5 845V868M730.5 868V855M731.5 855V868M731.5 868V866M733.5 866V869M736.5 869V867M740.5 867V855M741.5 855V868M743.5 868V869M745.5 869V867M746.5 867V869M748.5 869V870M750.5 870V855M751.5 855V869M752.5 869V868M754.5 868V870M755.5 870V868M760.5 868V865M763.5 865V869M764.5 869V813M764.5 813V869M766.5 869V868M769.5 868V866M771.5 866V869M772.5 869V870M774.5 870V868M777.5 868V869M778.5 869V868M783.5 868V860M784.5 860V868M784.5 868V869M786.5 869V868M787.5 868V816M787.5 816V868M794.5 868V864M794.5 864V868M795.5 868V863M796.5 863V868M799.5 868V869M804.5 869V868M808.5 868V870M810.5 870V867M811.5 867V868M813.5 868V869M817.5 869V868M819.5 868V871M820.5 871V870M822.5 870V869M824.5 869V864M824.5 864V869M826.5 869V867M829.5 867V868M831.5 868V867M839.5 867V860M839.5 860V867M840.5 867V868M846.5 868V866M848.5 866V867M848.5 867V861M848.5 861V867M849.5 867V852M849.5 852V867M852.5 867V868M855.5 868V869M857.5 869V867M857.5 867V808M857.5 808V867M860.5 867V861M861.5 861V867M861.5 867V869M863.5 869V862M864.5 862V842M864.5 842V862M865.5 862V855M866.5 855V862M869.5 862V867M870.5 867V801M871.5 801V868M872.5 868V867M872.5 867V860M873.5 860V867M875.5 867V870M875.5 870V865M876.5 865V870M876.5 870V867M878.5 867V870M879.5 870V869M881.5 869V866M881.5 866V861M882.5 861V866M882.5 866V868M884.5 868V869M885.5 869V870M886.5 870V862M886.5 862V870M888.5 870V867M890.5 867V869M893.5 869V867M895.5 867V865M895.5 865V867M896.5 867V868M899.5 868V870M900.5 870V868M901.5 868V859M901.5 859V868M903.5 868V816M903.5 816V868M905.5 868V870M906.5 870V869M907.5 869V850M907.5 850V869M908.5 869V870M909.5 870V869M911.5 869V866M912.5 866V856M913.5 856V866M916.5 866V869M916.5 869V860M916.5 860V869M917.5 869V870M918.5 870V860M918.5 860V870M919.5 870V867M920.5 867V870M922.5 870V868M923.5 868V866M924.5 866V863M924.5 863V866M924.5 866V861M927.5 861V868M927.5 868V863M927.5 863V868M928.5 868V867M929.5 867V869M930.5 869V860M930.5 860V869M934.5 869V867M935.5 867V858M936.5 858V868M938.5 868V869M942.5 869V863M942.5 863V869M946.5 869V865M947.5 865V869M948.5 869V861M949.5 861V869M950.5 869V866M951.5 866V863M951.5 863V866M952.5 866V860M953.5 860V866M953.5 866V867M958.5 867V868M958.5 868V860M959.5 860V868M960.5 868V858M961.5 858V870M961.5 870V863M962.5 863V849M963.5 849V863M968.5 863V866M971.5 866V868M973.5 868V865M974.5 865V815M974.5 815V865M974.5 865V859M977.5 859V865M982.5 865V869M984.5 869V862M984.5 862V869M987.5 869V862M987.5 862V869M988.5 869V868M990.5 868V866M993.5 866V869M993.5 869V858M994.5 858V869M995.5 869V842M996.5 842V867M999.5 867V868M1000.5 868V866M1002.5 866V807M1002.5 807V866M1003.5 866V860M1004.5 860V863M1009.5 863V870M1012.5 870V869M1016.5 869V859M1017.5 859V863M1019.5 863V823M1019.5 823V863M1020.5 863V870M1021.5 870V868M1023.5 868V865M1023.5 865V855M1024.5 855V865M1024.5 865V866M1025.5 866V861M1025.5 861V866M1026.5 866V867M1026.5 867V864M1027.5 864V867M1033.5 867V868M1035.5 868V865M1037.5 865V842M1038.5 842V865M1039.5 865V842M1040.5 842V868M1040.5 868V858M1041.5 858V867M1044.5 867V868M1045.5 868V842M1046.5 842V869M1047.5 869V865M1048.5 865V871M1050.5 871V866M1051.5 866V868M1052.5 868V863M1052.5 863V858M1053.5 858V869M1054.5 869V866M1056.5 866V867M1060.5 867V869M1062.5 869V866M1064.5 866V868M1067.5 868V864M1067.5 864V868M1070.5 868V850M1072.5 850V868M1074.5 868V838M1074.5 838V868M1080.5 868V808M1081.5 808V868M1082.5 868V850M1083.5 850V868M1084.5 868V857M1085.5 857V868M1088.5 868V860M1089.5 860V868M1091.5 868V869M1092.5 869V868M1094.5 868V867M1097.5 867V870M1097.5 870V859M1099.5 859V870M1099.5 870V850M1101.5 850V870M1101.5 870V867M1103.5 867V869M1104.5 869V860M1106.5 860V868M1109.5 868V865M1112.5 865V869M1113.5 869V868M1114.5 868V808M1116.5 808V867M1116.5 867V868M1118.5 868V867M1118.5 867V841M1118.5 841V867M1119.5 867V869M1122.5 869V868M1124.5 868V864M1127.5 864V857M1131.5 857V869M1131.5 869V868M1132.5 868V840M1132.5 840V868M1133.5 868V869M1134.5 869V867M1135.5 867V856M1137.5 856V867M1138.5 867V868M1138.5 868V863M1138.5 863V868M1139.5 868V864M1145.5 864V868M1146.5 868V859M1146.5 859V868M1147.5 868V860M1148.5 860V868M1149.5 868V864M1149.5 864V868M1150.5 868V861M1150.5 861V868M1151.5 868V864M1151.5 864V857M1153.5 857V864M1153.5 864V867M1153.5 867V852M1155.5 852V866M1156.5 866V845M1157.5 845V867M1159.5 867V808M1159.5 808V867M1162.5 867V859M1163.5 859V867M1164.5 867V846M1166.5 846V867M1167.5 867V861M1169.5 861V867M1174.5 867V860M1175.5 860V867M1179.5 867V861M1179.5 861V867M1180.5 867V861M1181.5 861V867M1183.5 867V868M1189.5 868V861M1190.5 861V868M1190.5 868V859M1193.5 859V869M1196.5 869V822M1197.5 822V867M1198.5 867V868M1198.5 868V851M1199.5 851V868M1199.5 868V863M1202.5 863V868M1204.5 868V870M1207.5 870V868M1211.5 868V867M1213.5 867V866M1217.5 866V860M1218.5 860V855M1218.5 855V860M1222.5 860V868M1222.5 868V867M1225.5 867V866M1227.5 866V867M1227.5 867V842M1227.5 842V867M1228.5 867V866M1230.5 866V869M1231.5 869V867M1233.5 867V866M1234.5 866V867M1234.5 867V856M1236.5 856V867M1237.5 867V870M1239.5 870V868M1240.5 868V869M1242.5 869V860M1243.5 860V869M1245.5 869V868M1245.5 868V861M1246.5 861V868M1248.5 868V861M1249.5 861V868M1251.5 868V861M1256.5 861V869M1262.5 869V860M1262.5 860V856M1263.5 856V860M1266.5 860V868M1267.5 868V867M1269.5 867V868M1270.5 868V860M1274.5 860V868M1279.5 868V867M1289.5 867V869M1289.5 869V860M1289.5 860V869M1290.5 869V866M1291.5 866V864M1291.5 864V866M1292.5 866V867M1293.5 867V869M1294.5 869V861M1294.5 861V869M1295.5 869V865M1297.5 865V848M1299.5 848V865M1299.5 865V869M1299.5 869V840M1301.5 840V867M1301.5 867V859M1301.5 859V867M1304.5 867V860M1305.5 860V867M1305.5 867V868M1306.5 868V858M1307.5 858V868M1308.5 868V801M1308.5 801V868M1310.5 868V867M1313.5 867V851M1313.5 851V868M1314.5 868V856M1317.5 856V867M1317.5 867V869M1319.5 869V849M1319.5 849V866M1320.5 866V869M1325.5 869V868M1326.5 868V858M1327.5 858V868M1328.5 868V867M1329.5 867V870M1332.5 870V869M1334.5 869V840M1334.5 840V868M1335.5 868V867M1338.5 867V869M1339.5 869V861M1339.5 861V869M1340.5 869V860M1341.5 860V869M1343.5 869V861M1344.5 861V869M1346.5 869V870M1346.5 870V864M1347.5 864V870M1349.5 870V868M1356.5 868V857M1357.5 857V867M1357.5 867V850M1359.5 850V869M1361.5 869V867M1364.5 867V841M1364.5 841V868M1365.5 868V859M1365.5 859V858M1366.5 858V869M1369.5 869V850M1369.5 850V859M1371.5 859V869M1372.5 869V868M1379.5 868V869M1381.5 869V867M1381.5 867V863M1382.5 863V867M1385.5 867V868M1387.5 868V869M1387.5 869V857M1388.5 857V867M1392.5 867V859M1392.5 859V867M1397.5 867V865M1399.5 865V869M1399.5 869V864M1400.5 864V869M1400.5 869V868M1402.5 868V858M1403.5 858V861M1403.5 861V866M1405.5 866V862M1408.5 862V858M1408.5 858V862M1411.5 862V868M1413.5 868V864M1413.5 864V868M1415.5 868V863M1418.5 863V867M1419.5 867V864M1419.5 864V867M1420.5 867V858M1421.5 858V866M1423.5 866V868M1425.5 868V863M1425.5 863V868M1429.5 868V860M1430.5 860V868M1430.5 868V867M1432.5 867V858M1433.5 858V869M1433.5 869V867M1435.5 867V849M1436.5 849V868M1436.5 868V867M1438.5 867V870M1440.5 870V866M1441.5 866V867M1442.5 867V862M1442.5 862V867M1443.5 867V870M1446.5 870V864M1446.5 864V870M1449.5 870V867M1450.5 867V863M1450.5 863V861M1452.5 861V863M1453.5 863V867M1456.5 867V868M1457.5 868V860M1457.5 860V868M1458.5 868V861M1463.5 861V869M1468.5 869V865M1469.5 865V861M1472.5 861V869M1472.5 869V860M1472.5 860V869M1473.5 869V855M1474.5 855V869M1474.5 869V866M1475.5 866V860M1475.5 860V866M1476.5 866V869M1479.5 869V870M1482.5 870V867M1485.5 867V868M1486.5 868V869M1488.5 869V845M1488.5 845V869M1488.5 869V862M1489.5 862V860M1495.5 860V868M1495.5 868V869M1496.5 869V859M1496.5 859V869M1497.5 869V849M1497.5 849V861M1498.5 861V866M1500.5 866V869M1501.5 869V868M1502.5 868V863M1502.5 863V868M1504.5 868V866M1506.5 866V868M1506.5 868V861M1507.5 861V868M1507.5 868V869M1510.5 869V867M1512.5 867V869M1515.5 869V868M1519.5 868V858M1521.5 858V870M1522.5 870V859M1522.5 859V870M1523.5 870V847M1524.5 847V867M1524.5 867V861M1527.5 861V870M1527.5 870V868M1529.5 868V867M1531.5 867V863M1531.5 863V867M1532.5 867V862M1533.5 862V850M1533.5 850V858M1535.5 858V868M1544.5 868V862M1545.5 862V868M1553.5 868V865M1553.5 865V858M1556.5 858V867M1556.5 867V869M1557.5 869V868M1558.5 868V861M1561.5 861V868M1562.5 868V870M1562.5 870V864M1563.5 864V813M1564.5 813V868M1564.5 868V859M1567.5 859V866M1568.5 866V868M1570.5 868V863M1570.5 863V868M1574.5 868V841M1576.5 841V868M1577.5 868V867M1580.5 867V868M1582.5 868V859M1583.5 859V841M1583.5 841V859M1586.5 859V867M1587.5 867V862M1588.5 862V790M1588.5 790V838M1589.5 838V862M1591.5 862V869M1592.5 869V826M1593.5 826V868M1594.5 868V869M1596.5 869V862M1596.5 862V869M1597.5 869V856M1598.5 856V869M1598.5 869V868M1602.5 868V847M1602.5 847V868M1606.5 868V867M1607.5 867V868M1613.5 868V855M1614.5 855V870M1615.5 870V869M1618.5 869V865M1619.5 865V869M1619.5 869V866M1622.5 866V869M1625.5 869V850M1626.5 850V869M1627.5 869V868M1627.5 868V860M1628.5 860V868M1631.5 868V869M1633.5 869V868M1633.5 868V862M1634.5 862V868M1635.5 868V860M1637.5 860V868M1637.5 868V866M1640.5 866V867M1642.5 867V843M1642.5 843V856M1644.5 856V868M1645.5 868V867M1645.5 867V862M1646.5 862V867M1649.5 867V863M1652.5 863V868M1653.5 868V856M1654.5 856V868M1654.5 868V862M1655.5 862V868M1656.5 868V850M1658.5 850V868M1659.5 868V826M1659.5 826V865M1659.5 865V868M1660.5 868V870M1664.5 870V869M1668.5 869V868M1669.5 868V825M1669.5 825V868M1671.5 868V865M1671.5 865V868M1672.5 868V797M1673.5 797V869M1674.5 869V863M1675.5 863V837M1676.5 837V869M1678.5 869V850M1681.5 850V867M1682.5 867V858M1684.5 858V867M1684.5 867V868M1685.5 868V861M1685.5 861V868M1687.5 868V867M1688.5 867V862M1688.5 862V867M1692.5 867V869M1695.5 869V862M1696.5 862V869M1696.5 869V853M1697.5 853V869M1699.5 869V867M1700.5 867V860M1703.5 860V867M1704.5 867V846M1704.5 846V862M1705.5 862V867M1705.5 867V869M1707.5 869V866M1708.5 866V868M1709.5 868V860M1709.5 860V868M1710.5 868V786M1711.5 786V869M1711.5 869V867M1712.5 867V853M1713.5 853V867M1716.5 867V868M1719.5 868V858M1720.5 858V867M1722.5 867V865M1723.5 865V860M1724.5 860V797M1724.5 797V860M1727.5 860V868M1729.5 868V869M1731.5 869V867M1733.5 867V864M1733.5 864V867M1735.5 867V851M1736.5 851V866M1737.5 866V836M1738.5 836V870M1739.5 870V822M1740.5 822V832M1741.5 832V869M1741.5 869V840M1742.5 840V867M1743.5 867V786M1743.5 786V867M1748.5 867V869M1749.5 869V858M1749.5 858V869M1751.5 869V865M1751.5 865V861M1751.5 861V865M1752.5 865V869M1754.5 869V868M1754.5 868V861M1756.5 861V868M1757.5 868V869M1758.5 869V863M1761.5 863V810M1762.5 810V863M1763.5 863V793M1763.5 793V863M1764.5 863V866M1766.5 866V867M1767.5 867V869M1769.5 869V870M1769.5 870V862M1770.5 862V870M1770.5 870V865M1773.5 865V867M1775.5 867V866M1778.5 866V869M1778.5 869V858M1780.5 858V868M1780.5 868V853M1782.5 853V868M1782.5 868V867M1790.5 867V868M1791.5 868V865M1792.5 865V862M1792.5 862V865M1793.5 865V870M1794.5 870V863M1796.5 863V867M1796.5 867V856M1798.5 856V867M1799.5 867V843M1799.5 843V856M1801.5 856V868M1805.5 868V870M1806.5 870V869M1807.5 869V856M1809.5 856V870M1809.5 870V867M1811.5 867V860M1812.5 860V820M1812.5 820V860M1816.5 860V869M1819.5 869V870M1822.5 870V861M1822.5 861V870M1825.5 870V849M1826.5 849V871M1828.5 871V856M1829.5 856V871M1829.5 871V868M1834.5 868V869M1836.5 869V861M1840.5 861V868M1841.5 868V869M1842.5 869V837M1842.5 837V869M1843.5 869V868M1843.5 868V863M1844.5 863V868M1847.5 868V863M1848.5 863V823M1848.5 823V863" stroke="#141414" stroke-width="1.1" fill="none"/>
<path d="M283.5 859H285.5V871H283.5ZM297.5 857H299.5V866H297.5ZM324.5 863H325.5V867H324.5ZM327.5 861H328.5V869H327.5ZM330.5 860H331.5V867H330.5ZM333.5 862H334.5V868H333.5ZM339.5 865H340.5V868H339.5ZM351.5 865H352.5V869H351.5ZM355.5 802H356.5V866H355.5ZM357.5 866H358.5V868H357.5ZM380.5 854H381.5V866H380.5ZM398.5 860H399.5V868H398.5ZM400.5 832H401.5V868H400.5ZM404.5 862H405.5V868H404.5ZM409.5 857H412.5V869H409.5ZM418.5 824H419.5V865H418.5ZM430.5 856H431.5V870H430.5ZM443.5 863H444.5V869H443.5ZM449.5 864H450.5V868H449.5ZM461.5 857H463.5V867H461.5ZM475.5 866H476.5V869H475.5ZM523.5 864H524.5V867H523.5ZM528.5 812H530.5V867H528.5ZM534.5 853H537.5V863H534.5ZM545.5 851H547.5V870H545.5ZM548.5 857H550.5V870H548.5ZM552.5 864H553.5V870H552.5ZM555.5 865H556.5V868H555.5ZM582.5 865H583.5V869H582.5ZM584.5 836H586.5V867H584.5ZM588.5 849H589.5V866H588.5ZM590.5 857H592.5V866H590.5ZM624.5 735H625.5V862H624.5ZM625.5 652H626.5V862H625.5ZM626.5 834H628.5V862H626.5ZM638.5 860H639.5V867H638.5ZM639.5 855H641.5V868H639.5ZM668.5 860H669.5V869H668.5ZM692.5 867H694.5V869H692.5ZM700.5 865H701.5V868H700.5ZM703.5 861H704.5V867H703.5ZM708.5 814H709.5V867H708.5ZM728.5 845H729.5V868H728.5ZM730.5 855H731.5V868H730.5ZM731.5 866H733.5V868H731.5ZM740.5 855H741.5V867H740.5ZM745.5 867H746.5V869H745.5ZM750.5 855H751.5V869H750.5ZM769.5 866H771.5V868H769.5ZM783.5 860H784.5V868H783.5ZM795.5 863H796.5V868H795.5ZM860.5 861H861.5V867H860.5ZM865.5 855H866.5V862H865.5ZM870.5 801H871.5V867H870.5ZM872.5 860H873.5V867H872.5ZM875.5 865H876.5V870H875.5ZM876.5 867H878.5V870H876.5ZM881.5 861H882.5V866H881.5ZM888.5 867H890.5V869H888.5ZM912.5 856H913.5V866H912.5ZM919.5 867H920.5V870H919.5ZM924.5 861H927.5V866H924.5ZM935.5 858H936.5V867H935.5ZM946.5 865H947.5V869H946.5ZM948.5 861H949.5V869H948.5ZM952.5 860H953.5V866H952.5ZM958.5 860H959.5V868H958.5ZM960.5 858H961.5V868H960.5ZM962.5 849H963.5V863H962.5ZM974.5 859H977.5V865H974.5ZM993.5 858H994.5V869H993.5ZM995.5 842H996.5V867H995.5ZM1003.5 860H1004.5V863H1003.5ZM1016.5 859H1017.5V863H1016.5ZM1023.5 855H1024.5V865H1023.5ZM1026.5 864H1027.5V867H1026.5ZM1037.5 842H1038.5V865H1037.5ZM1039.5 842H1040.5V865H1039.5ZM1040.5 858H1041.5V867H1040.5ZM1045.5 842H1046.5V868H1045.5ZM1047.5 865H1048.5V869H1047.5ZM1050.5 866H1051.5V868H1050.5ZM1052.5 858H1053.5V863H1052.5ZM1062.5 866H1064.5V868H1062.5ZM1070.5 850H1072.5V868H1070.5ZM1080.5 808H1081.5V868H1080.5ZM1082.5 850H1083.5V868H1082.5ZM1084.5 857H1085.5V868H1084.5ZM1088.5 860H1089.5V868H1088.5ZM1097.5 859H1099.5V870H1097.5ZM1099.5 850H1101.5V870H1099.5ZM1101.5 867H1103.5V869H1101.5ZM1104.5 860H1106.5V868H1104.5ZM1135.5 856H1137.5V867H1135.5ZM1147.5 860H1148.5V868H1147.5ZM1151.5 857H1153.5V864H1151.5ZM1153.5 852H1155.5V866H1153.5ZM1156.5 845H1157.5V866H1156.5ZM1162.5 859H1163.5V867H1162.5ZM1164.5 846H1166.5V867H1164.5ZM1167.5 861H1169.5V867H1167.5ZM1174.5 860H1175.5V867H1174.5ZM1180.5 861H1181.5V867H1180.5ZM1189.5 861H1190.5V868H1189.5ZM1190.5 859H1193.5V868H1190.5ZM1196.5 822H1197.5V867H1196.5ZM1198.5 851H1199.5V868H1198.5ZM1234.5 856H1236.5V867H1234.5ZM1242.5 860H1243.5V869H1242.5ZM1245.5 861H1246.5V868H1245.5ZM1248.5 861H1249.5V868H1248.5ZM1262.5 856H1263.5V860H1262.5ZM1297.5 848H1299.5V865H1297.5ZM1299.5 840H1301.5V867H1299.5ZM1304.5 860H1305.5V867H1304.5ZM1306.5 858H1307.5V868H1306.5ZM1314.5 856H1317.5V867H1314.5ZM1326.5 858H1327.5V868H1326.5ZM1340.5 860H1341.5V869H1340.5ZM1343.5 861H1344.5V869H1343.5ZM1346.5 864H1347.5V870H1346.5ZM1356.5 857H1357.5V867H1356.5ZM1357.5 850H1359.5V867H1357.5ZM1381.5 863H1382.5V867H1381.5ZM1387.5 857H1388.5V867H1387.5ZM1397.5 865H1399.5V867H1397.5ZM1399.5 864H1400.5V869H1399.5ZM1402.5 858H1403.5V861H1402.5ZM1420.5 858H1421.5V866H1420.5ZM1429.5 860H1430.5V868H1429.5ZM1432.5 858H1433.5V867H1432.5ZM1435.5 849H1436.5V867H1435.5ZM1450.5 861H1452.5V863H1450.5ZM1469.5 861H1472.5V865H1469.5ZM1473.5 855H1474.5V869H1473.5ZM1504.5 866H1506.5V868H1504.5ZM1506.5 861H1507.5V868H1506.5ZM1510.5 867H1512.5V869H1510.5ZM1519.5 858H1521.5V868H1519.5ZM1523.5 847H1524.5V867H1523.5ZM1524.5 861H1527.5V867H1524.5ZM1544.5 862H1545.5V868H1544.5ZM1553.5 858H1556.5V865H1553.5ZM1558.5 861H1561.5V868H1558.5ZM1563.5 813H1564.5V864H1563.5ZM1564.5 859H1567.5V866H1564.5ZM1574.5 841H1576.5V868H1574.5ZM1592.5 826H1593.5V868H1592.5ZM1597.5 856H1598.5V869H1597.5ZM1613.5 855H1614.5V868H1613.5ZM1618.5 865H1619.5V869H1618.5ZM1625.5 850H1626.5V869H1625.5ZM1627.5 860H1628.5V868H1627.5ZM1633.5 862H1634.5V868H1633.5ZM1635.5 860H1637.5V868H1635.5ZM1645.5 862H1646.5V867H1645.5ZM1653.5 856H1654.5V868H1653.5ZM1654.5 862H1655.5V868H1654.5ZM1656.5 850H1658.5V868H1656.5ZM1672.5 797H1673.5V868H1672.5ZM1675.5 837H1676.5V863H1675.5ZM1678.5 850H1681.5V867H1678.5ZM1682.5 858H1684.5V867H1682.5ZM1695.5 862H1696.5V869H1695.5ZM1696.5 853H1697.5V869H1696.5ZM1700.5 860H1703.5V867H1700.5ZM1707.5 866H1708.5V868H1707.5ZM1710.5 786H1711.5V868H1710.5ZM1712.5 853H1713.5V867H1712.5ZM1719.5 858H1720.5V867H1719.5ZM1735.5 851H1736.5V866H1735.5ZM1737.5 836H1738.5V866H1737.5ZM1739.5 822H1740.5V832H1739.5ZM1741.5 840H1742.5V867H1741.5ZM1754.5 861H1756.5V868H1754.5ZM1761.5 810H1762.5V863H1761.5ZM1769.5 862H1770.5V870H1769.5ZM1778.5 858H1780.5V868H1778.5ZM1780.5 853H1782.5V868H1780.5ZM1794.5 863H1796.5V867H1794.5ZM1796.5 856H1798.5V867H1796.5ZM1807.5 856H1809.5V869H1807.5ZM1825.5 849H1826.5V870H1825.5ZM1828.5 856H1829.5V871H1828.5ZM1843.5 863H1844.5V868H1843.5ZM110.5 807H113.5V867H110.5ZM355.5 802H356.5V867H355.5ZM400.5 832H401.5V867H400.5ZM418.5 824H419.5V867H418.5ZM528.5 812H530.5V867H528.5ZM584.5 836H586.5V867H584.5ZM588.5 849H589.5V867H588.5ZM624.5 735H625.5V867H624.5ZM625.5 652H626.5V867H625.5ZM626.5 834H628.5V867H626.5ZM708.5 814H709.5V867H708.5ZM870.5 801H871.5V867H870.5ZM962.5 849H963.5V867H962.5ZM995.5 842H996.5V867H995.5ZM1045.5 842H1046.5V867H1045.5ZM1070.5 850H1072.5V867H1070.5ZM1080.5 808H1081.5V867H1080.5ZM1082.5 850H1083.5V867H1082.5ZM1099.5 850H1101.5V867H1099.5ZM1114.5 808H1116.5V867H1114.5ZM1156.5 845H1157.5V867H1156.5ZM1164.5 846H1166.5V867H1164.5ZM1196.5 822H1197.5V867H1196.5ZM1297.5 848H1299.5V867H1297.5ZM1299.5 840H1301.5V867H1299.5ZM1357.5 850H1359.5V867H1357.5ZM1435.5 849H1436.5V867H1435.5ZM1563.5 813H1564.5V867H1563.5ZM1574.5 841H1576.5V867H1574.5ZM1588.5 838H1589.5V867H1588.5ZM1592.5 826H1593.5V867H1592.5ZM1625.5 850H1626.5V867H1625.5ZM1656.5 850H1658.5V867H1656.5ZM1672.5 797H1673.5V867H1672.5ZM1675.5 837H1676.5V867H1675.5ZM1678.5 850H1681.5V867H1678.5ZM1710.5 786H1711.5V867H1710.5ZM1825.5 849H1826.5V867H1825.5Z" fill="#141414" stroke="none"/>
<path d="M306 589V948M531.2 589V948M534 589V948" stroke="#f00" stroke-width="1.6"/><path d="M1306 589V948" stroke="#f00" stroke-width="1.8"/>
<path d="M39.5 589V949" stroke="#555" stroke-width="1"/><path d="M39 948.8H1849" stroke="#666" stroke-width="1.2"/>
<path d="M77.7 948V953M258.8 948V953M439.9 948V953M621.0 948V953M802.1 948V953M983.2 948V953M1164.3 948V953M1345.4 948V953M1526.5 948V953M1707.6 948V953" stroke="#1a1a1a" stroke-width="1.6"/>
</svg>
<div class="tk" style="left:47.3px">22:14</div>
<div class="tk" style="left:228.4px">22:15</div>
<div class="tk" style="left:409.5px">22:16</div>
<div class="tk" style="left:590.6px">22:17</div>
<div class="tk" style="left:771.7px">22:18</div>
<div class="tk" style="left:952.8px">22:19</div>
<div class="tk" style="left:1133.9px">22:20</div>
<div class="tk" style="left:1315.0px">22:21</div>
<div class="tk" style="left:1496.1px">22:22</div>
<div class="tk" style="left:1677.2px">22:23</div>
<div class="a r" style="left:5px;width:30px;top:582px;font-size:13px;color:#333;letter-spacing:-0.3px">70</div>
<div class="a r" style="left:5px;width:30px;top:930px;font-size:13px;color:#333">0</div>
<div class="a r" style="left:5px;width:30px;top:554.5px;font-size:13px;color:#8b0000;letter-spacing:-0.3px">35</div>
<div class="a" style="left:1851px;top:584px;font-size:13px;color:#c0211f;letter-spacing:-0.3px">30</div>
<div class="a c" style="left:-20px;width:100px;top:759px;font-size:13px;color:#444;transform:rotate(-90deg)">Latency (ms)</div>
<div class="a c" style="left:1807px;width:100px;top:769.5px;font-size:13px;color:#c0211f;transform:rotate(90deg)">Packet Loss %</div>
<div class="a c" style="left:914px;width:60px;top:548px;font-size:11.5px;color:#8b1a1a;letter-spacing:-0.2px">Jitter (ms)</div>
</body></html>
